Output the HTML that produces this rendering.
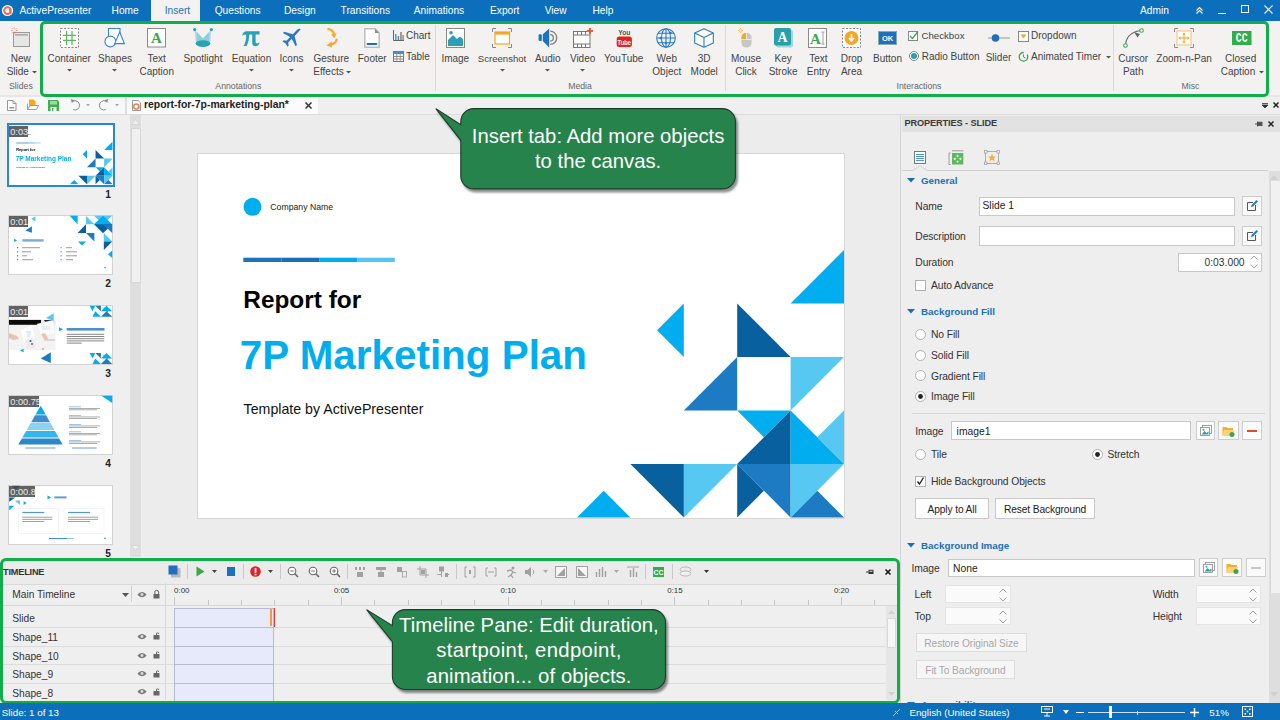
<!DOCTYPE html><html><head><meta charset="utf-8"><style>
html,body{margin:0;padding:0;}
body{width:1280px;height:720px;position:relative;overflow:hidden;background:#efefef;font-family:"Liberation Sans", sans-serif;}
.t{position:absolute;white-space:nowrap;line-height:20px;}
svg{overflow:visible}
</style></head><body>
<div style="position:absolute;left:0px;top:0px;width:1280px;height:21px;background:#0b6fbc;"></div>
<div style="position:absolute;left:151px;top:0px;width:49px;height:21px;background:#f3f2f1;"></div>
<svg style="position:absolute;left:1px;top:4px;" width="13" height="13" viewBox="0 0 13 13"><circle cx="6.5" cy="6.5" r="5.6" fill="#fff"/><circle cx="6.5" cy="6.6" r="3.4" fill="none" stroke="#ec6a4f" stroke-width="1.9"/><path d="M8.6 5 L9.8 10" stroke="#ec6a4f" stroke-width="1.6"/></svg>
<div class="t" style="left:19.4px;top:1.4000000000000004px;font-size:10.2px;color:#ffffff;font-weight:normal;">ActivePresenter</div>
<div class="t" style="left:111.6px;top:1.4000000000000004px;font-size:10.2px;color:#ffffff;font-weight:normal;">Home</div>
<div class="t" style="left:164.7px;top:1.4000000000000004px;font-size:10.2px;color:#1f6fb8;font-weight:normal;">Insert</div>
<div class="t" style="left:214.7px;top:1.4000000000000004px;font-size:10.2px;color:#ffffff;font-weight:normal;">Questions</div>
<div class="t" style="left:284px;top:1.4000000000000004px;font-size:10.2px;color:#ffffff;font-weight:normal;">Design</div>
<div class="t" style="left:340.6px;top:1.4000000000000004px;font-size:10.2px;color:#ffffff;font-weight:normal;">Transitions</div>
<div class="t" style="left:413.8px;top:1.4000000000000004px;font-size:10.2px;color:#ffffff;font-weight:normal;">Animations</div>
<div class="t" style="left:490px;top:1.4000000000000004px;font-size:10.2px;color:#ffffff;font-weight:normal;">Export</div>
<div class="t" style="left:544.7px;top:1.4000000000000004px;font-size:10.2px;color:#ffffff;font-weight:normal;">View</div>
<div class="t" style="left:592.5px;top:1.4000000000000004px;font-size:10.2px;color:#ffffff;font-weight:normal;">Help</div>
<div class="t" style="left:1140px;top:1.1999999999999993px;font-size:10.2px;color:#fff;font-weight:normal;">Admin</div>
<svg style="position:absolute;left:1194px;top:5px;" width="11" height="11" viewBox="0 0 11 11"><path d="M2.5 5.5 L5.5 2.5 L8.5 5.5 M2.5 8.5 L5.5 5.5 L8.5 8.5" stroke="#fff" stroke-width="1.1" fill="none"/></svg>
<div style="position:absolute;left:1218px;top:13px;width:8px;height:1px;background:#fff;"></div>
<div style="position:absolute;left:1241px;top:5px;width:8px;height:8px;border:1px solid #fff;box-sizing:border-box;"></div>
<svg style="position:absolute;left:1264px;top:5px;" width="9" height="9" viewBox="0 0 9 9"><path d="M0.5 0.5 L8.5 8.5 M8.5 0.5 L0.5 8.5" stroke="#fff" stroke-width="1.1"/></svg>
<div style="position:absolute;left:0px;top:21px;width:1280px;height:74px;background:#f3f2f1;"></div>
<div style="position:absolute;left:0px;top:95px;width:1280px;height:2px;background:#e6e6e6;"></div>
<div style="position:absolute;left:40px;top:21px;width:1228.5px;height:75.5px;border:3px solid #10ad4b;border-radius:5px;box-sizing:border-box;"></div>
<div style="position:absolute;left:435px;top:25px;width:1px;height:66px;background:#dadada;"></div>
<div style="position:absolute;left:725px;top:25px;width:1px;height:66px;background:#dadada;"></div>
<div style="position:absolute;left:1113px;top:25px;width:1px;height:66px;background:#dadada;"></div>
<svg style="position:absolute;left:11px;top:27px;" width="20" height="21" viewBox="0 0 20 21"><rect x="2.5" y="5.5" width="16" height="14" fill="#e6e6e6" stroke="#999" stroke-width="1"/><rect x="4" y="7" width="13" height="1.6" fill="#aaa"/><g stroke="#f07050" stroke-width="0.7"><path d="M3.2 0.3 V1.8 M3.2 5.2 V6.7 M0 3.5 H1.5 M4.9 3.5 H6.4 M1 1.3 L2 2.3 M4.4 4.7 L5.4 5.7 M5.4 1.3 L4.4 2.3 M2 4.7 L1 5.7"/></g></svg>
<div class="t" style="left:-179.2px;width:400px;text-align:center;top:48.6px;font-size:10px;color:#444;font-weight:normal;">New</div>
<div class="t" style="left:-182.2px;width:400px;text-align:center;top:61.8px;font-size:10px;color:#444;font-weight:normal;">Slide</div>
<svg style="position:absolute;left:31.5px;top:70.9px;" width="5" height="3" viewBox="0 0 5 3"><path d="M0 0 L5 0 L2.5 2.6 Z" fill="#555"/></svg>
<div class="t" style="left:-179.1px;width:400px;text-align:center;top:75.6px;font-size:8.7px;color:#666;font-weight:normal;">Slides</div>
<svg style="position:absolute;left:60px;top:28px;" width="19" height="20" viewBox="0 0 19 20"><rect x="0.5" y="0.5" width="18" height="19" fill="#fff" stroke="#888" stroke-dasharray="2 1.5"/><g stroke="#5cb85c" stroke-width="1.3"><path d="M6.6 3 V17 M12 3 V17 M3 7.3 H16 M3 12.4 H16"/></g></svg>
<div class="t" style="left:-130.8px;width:400px;text-align:center;top:48.6px;font-size:10px;color:#444;font-weight:normal;">Container</div>
<svg style="position:absolute;left:66.9px;top:69.2px;" width="5" height="3" viewBox="0 0 5 3"><path d="M0 0 L5 0 L2.5 2.6 Z" fill="#555"/></svg>
<svg style="position:absolute;left:104px;top:28px;" width="21" height="20" viewBox="0 0 21 20"><rect x="4.5" y="0.5" width="11.5" height="11" fill="#fff" stroke="#3a86d0" stroke-width="1.1"/><circle cx="6.3" cy="13.5" r="5.4" fill="#fff" stroke="#3a86d0" stroke-width="1.1"/><path d="M15.7 4 L10.7 15.6 L20.4 15.6 Z" fill="#fff" stroke="#3a86d0" stroke-width="1.1"/></svg>
<div class="t" style="left:-85px;width:400px;text-align:center;top:48.6px;font-size:10px;color:#444;font-weight:normal;">Shapes</div>
<svg style="position:absolute;left:112.2px;top:69.2px;" width="5" height="3" viewBox="0 0 5 3"><path d="M0 0 L5 0 L2.5 2.6 Z" fill="#555"/></svg>
<svg style="position:absolute;left:147px;top:28px;" width="19" height="19.5" viewBox="0 0 19 19.5"><rect x="0.5" y="0.5" width="18" height="18.5" fill="#fff" stroke="#8a8a8a" stroke-width="1"/><text x="9.5" y="15.2" font-family="Liberation Serif" font-weight="bold" font-size="15" fill="#3aa84a" text-anchor="middle">A</text></svg>
<div class="t" style="left:-43.30000000000001px;width:400px;text-align:center;top:48.6px;font-size:10px;color:#444;font-weight:normal;">Text</div>
<div class="t" style="left:-43.30000000000001px;width:400px;text-align:center;top:61.8px;font-size:10px;color:#444;font-weight:normal;">Caption</div>
<svg style="position:absolute;left:193px;top:28px;" width="20" height="20" viewBox="0 0 20 20"><path d="M1.7 1.6 L10 10.5 L18.3 1.6 L17.2 15.2 H2.8 Z" fill="#a9dbe3"/><path d="M4 4.2 L10 10.5 L16 4.2 L16.3 14 H3.7 Z" fill="#8fcfda"/><ellipse cx="10" cy="15.6" rx="7.3" ry="3.4" fill="#2aa0b3"/><circle cx="1.7" cy="1.6" r="1.6" fill="#2aa0b3"/><circle cx="18.3" cy="1.6" r="1.6" fill="#2aa0b3"/></svg>
<div class="t" style="left:3px;width:400px;text-align:center;top:48.6px;font-size:10px;color:#444;font-weight:normal;">Spotlight</div>
<svg style="position:absolute;left:242px;top:30px;" width="18" height="17" viewBox="0 0 18 17"><path d="M0.3 5.2 C0.8 2.8 2.2 1.2 4.8 1.2 H17.6 V4.6 H13.6 V11.6 C13.6 13 14.3 13.5 15.2 13.5 C15.9 13.5 16.5 13.1 16.9 12.4 L17.6 12.8 C16.9 15 15.6 16.2 13.6 16.2 C11.3 16.2 10.2 14.8 10.2 12.4 V4.6 H7.2 C7 9 6.4 13 4.6 16 H1.6 C3.6 12.6 4.3 8.8 4.3 4.6 C2.6 4.6 1.6 5 1 5.6 Z" fill="#2aa0b3"/></svg>
<div class="t" style="left:51.5px;width:400px;text-align:center;top:48.6px;font-size:10px;color:#444;font-weight:normal;">Equation</div>
<svg style="position:absolute;left:249.0px;top:69.2px;" width="5" height="3" viewBox="0 0 5 3"><path d="M0 0 L5 0 L2.5 2.6 Z" fill="#555"/></svg>
<svg style="position:absolute;left:282px;top:28px;" width="20" height="20" viewBox="0 0 20 20"><path transform="translate(-0.8,0.2) scale(1.06,1.1)" d="M19 1 C17.5 0 15.8 0.6 14.6 1.8 L11 5.4 L2.8 3.2 L1.6 4.4 L8.4 8 L5 11.4 L2.2 11 L1.2 12 L4.2 13.8 L6 16.8 L7 15.8 L6.6 13 L10 9.6 L13.6 16.4 L14.8 15.2 L12.6 7 L16.2 3.4 C17.4 2.2 18 0.5 19 1 Z" fill="#2878c8"/></svg>
<div class="t" style="left:91.5px;width:400px;text-align:center;top:48.6px;font-size:10px;color:#444;font-weight:normal;">Icons</div>
<svg style="position:absolute;left:289.0px;top:69.2px;" width="5" height="3" viewBox="0 0 5 3"><path d="M0 0 L5 0 L2.5 2.6 Z" fill="#555"/></svg>
<svg style="position:absolute;left:326px;top:28px;" width="12" height="20" viewBox="0 0 12 20"><path d="M1.5 0.8 C5 1.2 7.6 3 8.2 6.8" stroke="#f7a832" stroke-width="2.3" fill="none"/><path d="M5.2 6.2 L10.6 5.6 L8.3 10.6 Z" fill="#f7a832"/><path d="M10.8 10.8 C10.6 14 8.4 15.8 5 16.6" stroke="#f7a832" stroke-width="2.3" fill="none"/><path d="M5.8 13.2 L0.5 17.6 L6 19.6 Z" fill="#f7a832"/></svg>
<div class="t" style="left:131.3px;width:400px;text-align:center;top:48.6px;font-size:10px;color:#444;font-weight:normal;">Gesture</div>
<div class="t" style="left:128.5px;width:400px;text-align:center;top:61.8px;font-size:10px;color:#444;font-weight:normal;">Effects</div>
<svg style="position:absolute;left:345.5px;top:70.7px;" width="5" height="3" viewBox="0 0 5 3"><path d="M0 0 L5 0 L2.5 2.6 Z" fill="#555"/></svg>
<svg style="position:absolute;left:364px;top:28px;" width="16" height="20" viewBox="0 0 16 20"><path d="M0.8 0.8 H11 L15.2 5 V19.2 H0.8 Z" fill="#fff" stroke="#bdbdbd" stroke-width="1.5" stroke-linejoin="round"/><path d="M11 0.8 L15.2 5 H11 Z" fill="#8a8a8a"/><rect x="2.6" y="15" width="10.8" height="1.9" rx="0.9" fill="#1a6fc0"/></svg>
<div class="t" style="left:172.2px;width:400px;text-align:center;top:48.6px;font-size:10px;color:#444;font-weight:normal;">Footer</div>
<svg style="position:absolute;left:393px;top:30px;" width="11" height="11" viewBox="0 0 11 11"><path d="M0.5 0 V10.5 H11" stroke="#666" fill="none"/><rect x="2" y="4" width="1.6" height="6" fill="#4aa3df"/><rect x="4.6" y="6" width="1.6" height="4" fill="#888"/><rect x="7.2" y="2" width="1.6" height="8" fill="#888"/><rect x="9.4" y="5" width="1.4" height="5" fill="#888"/></svg>
<div class="t" style="left:406px;top:26.200000000000003px;font-size:10px;color:#444;font-weight:normal;">Chart</div>
<svg style="position:absolute;left:393px;top:50.5px;" width="11" height="11" viewBox="0 0 11 11"><rect x="0.5" y="0.5" width="10" height="10" fill="#fff" stroke="#777"/><rect x="0.5" y="0.5" width="10" height="2.5" fill="#4a90d0"/><path d="M0.5 5.5 H10.5 M0.5 8 H10.5 M3.8 3 V10.5 M7.2 3 V10.5" stroke="#777" stroke-width="0.8"/></svg>
<div class="t" style="left:406px;top:46.5px;font-size:10px;color:#444;font-weight:normal;">Table</div>
<div class="t" style="left:38.30000000000001px;width:400px;text-align:center;top:75.6px;font-size:8.7px;color:#666;font-weight:normal;">Annotations</div>
<svg style="position:absolute;left:446px;top:28px;" width="19" height="20" viewBox="0 0 19 20"><rect x="0.5" y="0.5" width="18" height="19" fill="#fff" stroke="#888"/><path d="M2 18 L2 12 L7 7 L11 11 L14 8.5 L17 11 V18 Z" fill="#2aa0b3"/><circle cx="5" cy="4.8" r="1.8" fill="#2aa0b3"/></svg>
<div class="t" style="left:255.3px;width:400px;text-align:center;top:48.6px;font-size:10px;color:#444;font-weight:normal;">Image</div>
<svg style="position:absolute;left:492px;top:28px;" width="20" height="20" viewBox="0 0 20 20"><g stroke="#888" fill="none" stroke-width="1"><path d="M0.5 4 V0.5 H4 M16 0.5 H19.5 V4 M19.5 16 V19.5 H16 M4 19.5 H0.5 V16"/></g><rect x="3" y="4" width="14.5" height="12" fill="#fff" stroke="#f5a623" stroke-width="1.2"/><rect x="3" y="4" width="14.5" height="2.6" fill="#f5a623"/></svg>
<div class="t" style="left:302px;width:400px;text-align:center;top:48.6px;font-size:9.6px;color:#444;font-weight:normal;">Screenshot</div>
<svg style="position:absolute;left:499.5px;top:69.2px;" width="5" height="3" viewBox="0 0 5 3"><path d="M0 0 L5 0 L2.5 2.6 Z" fill="#555"/></svg>
<svg style="position:absolute;left:538px;top:28px;" width="20" height="20" viewBox="0 0 20 20"><rect x="0.6" y="6.3" width="3.2" height="6.8" rx="1" fill="#1a73c0"/><path d="M4.8 6.3 L11.2 0.6 V19.4 L4.8 13.1 Z" fill="#1a73c0"/><path d="M12.2 6.6 A3.2 3.2 0 0 1 12.2 13" stroke="#808080" stroke-width="1.3" fill="none"/><path d="M12.2 3.2 A6.6 6.6 0 0 1 12.2 16.4" stroke="#808080" stroke-width="1.3" fill="none"/></svg>
<div class="t" style="left:347.79999999999995px;width:400px;text-align:center;top:48.6px;font-size:10px;color:#444;font-weight:normal;">Audio</div>
<svg style="position:absolute;left:545.3px;top:69.2px;" width="5" height="3" viewBox="0 0 5 3"><path d="M0 0 L5 0 L2.5 2.6 Z" fill="#555"/></svg>
<svg style="position:absolute;left:573px;top:28px;" width="20" height="20" viewBox="0 0 20 20"><rect x="0.5" y="3.5" width="16.5" height="16" fill="#fff" stroke="#777"/><path d="M0.5 7 H17 M0.5 16 H17 M4.5 3.5 V7 M8.5 3.5 V7 M12.5 3.5 V7 M4.5 16 V19.5 M8.5 16 V19.5 M12.5 16 V19.5" stroke="#777"/><path d="M17 0 V6 M14 3 H20" stroke="#f05a28" stroke-width="2"/></svg>
<div class="t" style="left:382.6px;width:400px;text-align:center;top:48.6px;font-size:10px;color:#444;font-weight:normal;">Video</div>
<svg style="position:absolute;left:580.0px;top:69.2px;" width="5" height="3" viewBox="0 0 5 3"><path d="M0 0 L5 0 L2.5 2.6 Z" fill="#555"/></svg>
<svg style="position:absolute;left:616px;top:28px;" width="17" height="20" viewBox="0 0 17 20"><text x="8.3" y="7.4" font-family="Liberation Sans" font-weight="bold" font-size="8" fill="#555" text-anchor="middle" transform="translate(8.3 0) scale(0.85 1) translate(-8.3 0)">You</text><rect x="0.7" y="8.4" width="15.2" height="10.6" rx="2.5" fill="#e62117"/><text x="8.3" y="16.6" font-family="Liberation Sans" font-weight="bold" font-size="7.5" fill="#fff" text-anchor="middle" transform="translate(8.3 0) scale(0.78 1) translate(-8.3 0)">Tube</text></svg>
<div class="t" style="left:423.70000000000005px;width:400px;text-align:center;top:48.6px;font-size:10px;color:#444;font-weight:normal;">YouTube</div>
<svg style="position:absolute;left:656px;top:28px;" width="20" height="20" viewBox="0 0 20 20"><g stroke="#2a7ac8" stroke-width="1.1" fill="none"><circle cx="10" cy="10" r="9.3"/><ellipse cx="10" cy="10" rx="4.5" ry="9.3"/><path d="M10 0.7 V19.3 M0.7 10 H19.3 M2 5.2 H18 M2 14.8 H18"/></g><circle cx="4.5" cy="10" r="1.2" fill="#2a7ac8"/><circle cx="14.5" cy="5" r="1.2" fill="#2a7ac8"/><circle cx="10" cy="15" r="1.2" fill="#2a7ac8"/></svg>
<div class="t" style="left:466.79999999999995px;width:400px;text-align:center;top:48.6px;font-size:10px;color:#444;font-weight:normal;">Web</div>
<div class="t" style="left:466.79999999999995px;width:400px;text-align:center;top:61.8px;font-size:10px;color:#444;font-weight:normal;">Object</div>
<svg style="position:absolute;left:694px;top:28px;" width="20" height="20" viewBox="0 0 20 20"><g stroke="#2a7ac8" stroke-width="1.1" fill="#fff" stroke-linejoin="round"><path d="M10 0.7 L19.3 5 L19.3 15 L10 19.3 L0.7 15 L0.7 5 Z"/><path d="M0.7 5 L10 9.5 L19.3 5 M10 9.5 V19.3" fill="none"/></g></svg>
<div class="t" style="left:504.20000000000005px;width:400px;text-align:center;top:48.6px;font-size:10px;color:#444;font-weight:normal;">3D</div>
<div class="t" style="left:504.20000000000005px;width:400px;text-align:center;top:61.8px;font-size:10px;color:#444;font-weight:normal;">Model</div>
<div class="t" style="left:380px;width:400px;text-align:center;top:75.6px;font-size:8.7px;color:#666;font-weight:normal;">Media</div>
<svg style="position:absolute;left:738px;top:28px;" width="16" height="20" viewBox="0 0 16 20"><path d="M3.5 10 C3.5 6.5 5.5 5 8.5 5 C11.5 5 13.5 6.5 13.5 10 V15 C13.5 18 11.5 19.5 8.5 19.5 C5.5 19.5 3.5 18 3.5 15 Z" fill="#c6c6c6"/><path d="M8.5 5 C5.5 5 3.5 6.5 3.5 10 V11.5 H8.5 Z" fill="#f5a623"/><path d="M8.5 5 V11.5 M3.5 11.5 H13.5" stroke="#f3f2f1" stroke-width="0.8"/><g stroke="#f5a623" stroke-width="0.7"><path d="M2.5 0 V1.5 M2.5 3.5 V5 M0 2.5 H1.5 M3.5 2.5 H5 M0.8 0.8 L1.6 1.6 M3.4 3.4 L4.2 4.2 M4.2 0.8 L3.4 1.6 M1.6 3.4 L0.8 4.2"/></g></svg>
<div class="t" style="left:546px;width:400px;text-align:center;top:48.6px;font-size:10px;color:#444;font-weight:normal;">Mouse</div>
<div class="t" style="left:546px;width:400px;text-align:center;top:61.8px;font-size:10px;color:#444;font-weight:normal;">Click</div>
<svg style="position:absolute;left:774px;top:28px;" width="19" height="20" viewBox="0 0 19 20"><rect x="2" y="2" width="17" height="17.5" rx="2" fill="#9fd8dc"/><rect x="0" y="0" width="17" height="17.5" rx="2" fill="#2a9fa8"/><text x="8.5" y="14" font-family="Liberation Serif" font-weight="bold" font-size="14" fill="#fff" text-anchor="middle">A</text></svg>
<div class="t" style="left:583.1px;width:400px;text-align:center;top:48.6px;font-size:10px;color:#444;font-weight:normal;">Key</div>
<div class="t" style="left:583.1px;width:400px;text-align:center;top:61.8px;font-size:10px;color:#444;font-weight:normal;">Stroke</div>
<svg style="position:absolute;left:808px;top:28px;" width="19" height="20" viewBox="0 0 19 20"><rect x="0.5" y="0.5" width="18" height="19" fill="#fff" stroke="#8a8a8a"/><text x="7.5" y="15.5" font-family="Liberation Serif" font-weight="bold" font-size="15" fill="#3aa84a" text-anchor="middle">A</text><path d="M13.5 4 H16.5 M15 4 V16 M13.5 16 H16.5" stroke="#888" stroke-width="0.8"/></svg>
<div class="t" style="left:618.4px;width:400px;text-align:center;top:48.6px;font-size:10px;color:#444;font-weight:normal;">Text</div>
<div class="t" style="left:618.4px;width:400px;text-align:center;top:61.8px;font-size:10px;color:#444;font-weight:normal;">Entry</div>
<svg style="position:absolute;left:842px;top:28px;" width="19" height="20" viewBox="0 0 19 20"><rect x="0.5" y="0.5" width="18" height="19" fill="#fff" stroke="#888" stroke-dasharray="2 1.5"/><circle cx="9.5" cy="10" r="7" fill="#f5a623"/><path d="M9.5 6 V12 M7 10 L9.5 13 L12 10" stroke="#fff" stroke-width="1.7" fill="none"/></svg>
<div class="t" style="left:651.5px;width:400px;text-align:center;top:48.6px;font-size:10px;color:#444;font-weight:normal;">Drop</div>
<div class="t" style="left:651.5px;width:400px;text-align:center;top:61.8px;font-size:10px;color:#444;font-weight:normal;">Area</div>
<svg style="position:absolute;left:878px;top:31px;" width="19" height="14" viewBox="0 0 19 14"><rect x="0.5" y="0.5" width="18" height="13" fill="#1e6fc0" stroke="#8aa"/><text x="9.5" y="10.3" font-family="Liberation Sans" font-weight="bold" font-size="7.5" fill="#fff" text-anchor="middle">OK</text></svg>
<div class="t" style="left:687.5px;width:400px;text-align:center;top:48.6px;font-size:10px;color:#444;font-weight:normal;">Button</div>
<svg style="position:absolute;left:908px;top:31px;" width="11" height="10" viewBox="0 0 11 10"><rect x="0.5" y="0.5" width="9" height="9" fill="#fff" stroke="#888"/><path d="M2 5 L4.5 7.5 L10 0.5" stroke="#3aa84a" stroke-width="1.3" fill="none"/></svg>
<div class="t" style="left:921.4px;top:26.299999999999997px;font-size:9.7px;color:#444;font-weight:normal;">Checkbox</div>
<svg style="position:absolute;left:909px;top:51px;" width="10" height="10" viewBox="0 0 10 10"><circle cx="5" cy="5" r="4.5" fill="#fff" stroke="#888"/><circle cx="5" cy="5" r="3" fill="#2aa0b3"/></svg>
<div class="t" style="left:921.7px;top:46.8px;font-size:10px;color:#444;font-weight:normal;">Radio Button</div>
<svg style="position:absolute;left:988px;top:34px;" width="22" height="8" viewBox="0 0 22 8"><path d="M0 4 H22" stroke="#999" stroke-width="1"/><circle cx="7.5" cy="4" r="3.8" fill="#1e6fc0"/></svg>
<div class="t" style="left:798.5px;width:400px;text-align:center;top:47.5px;font-size:10px;color:#444;font-weight:normal;">Slider</div>
<svg style="position:absolute;left:1018px;top:30.5px;" width="11" height="11" viewBox="0 0 11 11"><rect x="0.5" y="0.5" width="10" height="10" fill="#fff" stroke="#888"/><path d="M2.5 3.5 L8.5 3.5 L5.5 7.5 Z" fill="#f5a623"/></svg>
<div class="t" style="left:1031px;top:26.299999999999997px;font-size:10px;color:#444;font-weight:normal;">Dropdown</div>
<svg style="position:absolute;left:1018px;top:51px;" width="11" height="11" viewBox="0 0 11 11"><circle cx="5.5" cy="5.8" r="4.3" fill="none" stroke="#3aa84a" stroke-width="1.3" stroke-dasharray="20 4"/><path d="M5.5 3.5 V6 L7.5 7" stroke="#3aa84a" stroke-width="1" fill="none"/></svg>
<div class="t" style="left:1031px;top:47.0px;font-size:10px;color:#444;font-weight:normal;">Animated Timer</div>
<svg style="position:absolute;left:1105.5px;top:55.7px;" width="5" height="3" viewBox="0 0 5 3"><path d="M0 0 L5 0 L2.5 2.6 Z" fill="#555"/></svg>
<div class="t" style="left:719px;width:400px;text-align:center;top:75.6px;font-size:8.7px;color:#666;font-weight:normal;">Interactions</div>
<svg style="position:absolute;left:1123px;top:28px;" width="21" height="20" viewBox="0 0 21 20"><path d="M2.5 17.5 C3 10 7 4 17.5 2.5" stroke="#666" stroke-width="1.1" fill="none"/><circle cx="2.5" cy="17.5" r="1.8" fill="#fff" stroke="#3aa84a" stroke-width="1.1"/><circle cx="18.5" cy="2.5" r="1.8" fill="#fff" stroke="#3aa84a" stroke-width="1.1"/><path d="M11 4 L17 6 L14.5 9.5 Z" fill="#666"/></svg>
<div class="t" style="left:933.2px;width:400px;text-align:center;top:48.6px;font-size:10px;color:#444;font-weight:normal;">Cursor</div>
<div class="t" style="left:933.2px;width:400px;text-align:center;top:61.8px;font-size:10px;color:#444;font-weight:normal;">Path</div>
<svg style="position:absolute;left:1174px;top:28px;" width="20" height="20" viewBox="0 0 20 20"><g stroke="#888" fill="none"><path d="M0.5 4 V0.5 H4 M16 0.5 H19.5 V4 M19.5 16 V19.5 H16 M4 19.5 H0.5 V16"/></g><rect x="3" y="3" width="14" height="14" fill="#fff" stroke="#f7b04a" stroke-width="0.8"/><path d="M10 5 V15 M5 10 H15" stroke="#f5a623" stroke-width="1.1"/><path d="M10 4.5 L8.3 6.5 H11.7 Z M10 15.5 L8.3 13.5 H11.7 Z M4.5 10 L6.5 8.3 V11.7 Z M15.5 10 L13.5 8.3 V11.7 Z" fill="#f5a623"/></svg>
<div class="t" style="left:984.0999999999999px;width:400px;text-align:center;top:48.6px;font-size:10px;color:#444;font-weight:normal;">Zoom-n-Pan</div>
<svg style="position:absolute;left:1232px;top:31px;" width="19.5" height="14" viewBox="0 0 19.5 14"><rect x="0" y="0" width="19.5" height="14" fill="#2fae49"/><text x="9.7" y="11.3" font-family="Liberation Mono" font-weight="bold" font-size="12" fill="#fff" text-anchor="middle" transform="translate(9.7 0) scale(0.82 1) translate(-9.7 0)">CC</text></svg>
<div class="t" style="left:1040.7px;width:400px;text-align:center;top:48.6px;font-size:10px;color:#444;font-weight:normal;">Closed</div>
<div class="t" style="left:1038px;width:400px;text-align:center;top:61.8px;font-size:10px;color:#444;font-weight:normal;">Caption</div>
<svg style="position:absolute;left:1258.5px;top:70.9px;" width="5" height="3" viewBox="0 0 5 3"><path d="M0 0 L5 0 L2.5 2.6 Z" fill="#555"/></svg>
<div class="t" style="left:990.5px;width:400px;text-align:center;top:75.6px;font-size:8.7px;color:#666;font-weight:normal;">Misc</div>
<div style="position:absolute;left:0px;top:97px;width:1280px;height:18px;background:#efefef;"></div>
<div style="position:absolute;left:0px;top:97px;width:125px;height:17px;background:#f8f8f8;"></div>
<div style="position:absolute;left:0px;top:114px;width:1280px;height:1px;background:#dcdcdc;"></div>
<svg style="position:absolute;left:7px;top:99.5px;" width="10" height="11" viewBox="0 0 10 11"><path d="M0.5 0.5 H6 L9 3.5 V10.5 H0.5 Z" fill="#fff" stroke="#8a8a8a" stroke-width="0.9"/><path d="M6 0.5 V3.5 H9" fill="none" stroke="#8a8a8a" stroke-width="0.8"/><rect x="2.3" y="7" width="5" height="1.5" fill="#999"/></svg>
<svg style="position:absolute;left:27px;top:99px;" width="12" height="12" viewBox="0 0 12 12"><path d="M2 0.5 H6.5 L8.5 2.5 V7.5 H2 Z" fill="#f5a623"/><path d="M0.5 4.5 V10.5 H9.5 L11.5 6.5 H3 L0.5 10.5" fill="#fafafa" stroke="#8a8a8a" stroke-width="0.8"/></svg>
<svg style="position:absolute;left:48px;top:99.5px;" width="11" height="11" viewBox="0 0 11 11"><path d="M0 0 H9.5 L11 1.5 V11 H0 Z" fill="#3fae4c"/><rect x="2" y="1" width="7" height="3.5" fill="#9fd8a8"/><rect x="2.5" y="7" width="6" height="4" fill="#fafafa"/><rect x="4" y="8" width="1.3" height="3" fill="#3fae4c"/></svg>
<svg style="position:absolute;left:70px;top:99px;" width="10" height="12" viewBox="0 0 10 12"><path d="M3 2.2 A4.6 4.6 0 1 1 3.2 10.6" stroke="#8a8a8a" stroke-width="1" fill="none"/><path d="M0.8 0 L4.6 1.2 L1.8 4 Z" fill="#8a8a8a"/></svg>
<svg style="position:absolute;left:85.5px;top:104px;" width="4" height="3" viewBox="0 0 4 3"><path d="M0 0 H4 L2 2.5 Z" fill="#aaa"/></svg>
<svg style="position:absolute;left:99px;top:99px;" width="10" height="12" viewBox="0 0 10 12"><path d="M7 2.2 A4.6 4.6 0 1 0 6.8 10.6" stroke="#8a8a8a" stroke-width="1" fill="none"/><path d="M9.2 0 L5.4 1.2 L8.2 4 Z" fill="#8a8a8a"/></svg>
<svg style="position:absolute;left:114.5px;top:104px;" width="4" height="3" viewBox="0 0 4 3"><path d="M0 0 H4 L2 2.5 Z" fill="#aaa"/></svg>
<div style="position:absolute;left:124.5px;top:97px;width:2px;height:17px;background:#dedede;"></div>
<div style="position:absolute;left:126.8px;top:97px;width:191px;height:17px;background:#fbfbfb;"></div>
<svg style="position:absolute;left:132px;top:100px;" width="9" height="11" viewBox="0 0 9 11"><path d="M0.5 0.5 H6.2 L8.5 2.8 V10.5 H0.5 Z" fill="#fff" stroke="#8c8c8c" stroke-width="0.9"/><circle cx="4.3" cy="6.6" r="2.6" fill="none" stroke="#f07a50" stroke-width="1.4"/><path d="M6.2 5.6 L6.8 9" stroke="#f07a50" stroke-width="1.2"/></svg>
<div class="t" style="left:144px;top:94.7px;font-size:10.4px;color:#222;font-weight:bold;">report-for-7p-marketing-plan*</div>
<svg style="position:absolute;left:305px;top:102px;" width="7" height="7" viewBox="0 0 7 7"><path d="M0.5 0.5 L6.5 6.5 M6.5 0.5 L0.5 6.5" stroke="#333" stroke-width="1.5"/></svg>
<svg style="position:absolute;left:1261.5px;top:102.5px;" width="6" height="5" viewBox="0 0 6 5"><path d="M0 0.5 H6 M0 2 H6 L3 5 Z" stroke="#333" fill="#333" stroke-width="0.8"/></svg>
<svg style="position:absolute;left:1272.5px;top:102.3px;" width="6" height="6" viewBox="0 0 6 6"><path d="M0.5 0.5 L5.5 5.5 M5.5 0.5 L0.5 5.5" stroke="#222" stroke-width="1.5"/></svg>
<div style="position:absolute;left:0px;top:115px;width:130px;height:443px;background:#efefef;"></div>
<div style="position:absolute;left:129.5px;top:115px;width:11.5px;height:443px;background:#dedede;"></div>
<div style="position:absolute;left:142px;top:115px;width:1.2px;height:443px;background:#dedede;"></div>
<div style="position:absolute;left:130.5px;top:127.5px;width:10px;height:155px;background:#f0f0f0;border:1px solid #d6d6d6;box-sizing:border-box;"></div>
<svg style="position:absolute;left:130px;top:117px;" width="11" height="9" viewBox="0 0 11 9"><path d="M1.5 7.5 L5.5 2.5 L9.5 7.5 Z" fill="#f0f0f0" stroke="#d0d0d0" stroke-width="0.8"/></svg>
<svg style="position:absolute;left:130px;top:544px;" width="11" height="9" viewBox="0 0 11 9"><path d="M1.5 1.5 L5.5 6.5 L9.5 1.5 Z" fill="#f0f0f0" stroke="#d0d0d0" stroke-width="0.8"/></svg>
<div style="position:absolute;left:115px;top:115px;width:0px;height:0px;"></div>
<div style="position:absolute;left:142px;top:115px;width:758px;height:443px;background:#ececec;"></div>
<div style="position:absolute;left:142px;top:114px;width:758px;height:1px;background:#dcdcdc;"></div>
<div style="position:absolute;left:197px;top:153px;width:648px;height:365.5px;background:#fff;border:1px solid #d6d6d6;box-sizing:border-box;"></div>
<div style="position:absolute;left:198px;top:154px;width:646px;height:364px;overflow:hidden;"><div class="t" style="left:0;top:0;width:646px;height:364px;background:#fff;"></div><svg style="position:absolute;left:0;top:0" width="646" height="364" viewBox="0 0 646 364"><circle cx="54.5" cy="52.8" r="9" fill="#00aeef"/><rect x="45.3" y="103.7" width="38" height="4.3" fill="#1c75bc"/><rect x="83.3" y="103.7" width="37.8" height="4.3" fill="#1b6fb6"/><rect x="121.1" y="103.7" width="38" height="4.3" fill="#00aeef"/><rect x="159.1" y="103.7" width="37.7" height="4.3" fill="#56c6f1"/><path d="M592.6 149.5 L646.0 96.0 L646.0 149.5 Z" fill="#00aeef"/><path d="M459.1 176.2 L485.8 149.5 L485.8 203.0 Z" fill="#00aeef"/><path d="M539.2 149.5 L539.2 203.0 L592.6 203.0 Z" fill="#08609e"/><path d="M485.8 256.5 L539.2 203.0 L539.2 256.5 Z" fill="#1c7bc2"/><path d="M592.6 203.0 L646.0 203.0 L592.6 256.5 Z" fill="#56c8f2"/><path d="M539.2 256.5 L592.6 256.5 L565.9 283.2 Z" fill="#00aeef"/><path d="M539.2 310.0 L592.6 256.5 L592.6 310.0 Z" fill="#08609e"/><path d="M646.0 256.5 L619.3 283.2 L646.0 310.0 Z" fill="#56c8f2"/><path d="M592.6 256.5 L592.6 310.0 L646.0 310.0 Z" fill="#00aeef"/><path d="M539.2 310.0 L592.6 310.0 L592.6 363.5 Z" fill="#1c7bc2"/><path d="M539.2 310.0 L565.9 336.8 L539.2 363.5 Z" fill="#08609e"/><path d="M592.6 310.0 L646.0 310.0 L592.6 363.5 Z" fill="#56c8f2"/><path d="M592.6 363.5 L619.3 336.8 L646.0 363.5 Z" fill="#1c7bc2"/><path d="M485.8 310.0 L539.2 310.0 L485.8 363.5 Z" fill="#56c8f2"/><path d="M432.4 310.0 L485.8 310.0 L485.8 363.5 Z" fill="#08609e"/><path d="M379.0 363.5 L405.7 336.8 L432.4 363.5 Z" fill="#00aeef"/></svg><div class="t" style="left:72.3px;top:42.7px;font-size:8.7px;color:#222;font-weight:normal;">Company Name</div><div class="t" style="left:45.3px;top:136.1px;font-size:24.4px;color:#000;font-weight:bold;">Report for</div><div class="t" style="left:41.8px;top:190.9px;font-size:40.4px;color:#00aeef;font-weight:bold;">7P Marketing Plan</div><div class="t" style="left:45.6px;top:245.3px;font-size:14.2px;color:#111;font-weight:normal;">Template by ActivePresenter</div></div>
<div style="position:absolute;left:7px;top:123.1px;width:107.5px;height:63.5px;border:2.3px solid #2a86db;box-sizing:border-box;background:#fff;"></div>
<div style="position:absolute;left:9px;top:126px;width:646px;height:364px;transform:scale(0.1605);transform-origin:0 0;overflow:hidden;"><div class="t" style="left:0;top:0;width:646px;height:364px;background:#fff;"></div><svg style="position:absolute;left:0;top:0" width="646" height="364" viewBox="0 0 646 364"><circle cx="54.5" cy="52.8" r="9" fill="#00aeef"/><rect x="45.3" y="103.7" width="38" height="4.3" fill="#1c75bc"/><rect x="83.3" y="103.7" width="37.8" height="4.3" fill="#1b6fb6"/><rect x="121.1" y="103.7" width="38" height="4.3" fill="#00aeef"/><rect x="159.1" y="103.7" width="37.7" height="4.3" fill="#56c6f1"/><path d="M592.6 149.5 L646.0 96.0 L646.0 149.5 Z" fill="#00aeef"/><path d="M459.1 176.2 L485.8 149.5 L485.8 203.0 Z" fill="#00aeef"/><path d="M539.2 149.5 L539.2 203.0 L592.6 203.0 Z" fill="#08609e"/><path d="M485.8 256.5 L539.2 203.0 L539.2 256.5 Z" fill="#1c7bc2"/><path d="M592.6 203.0 L646.0 203.0 L592.6 256.5 Z" fill="#56c8f2"/><path d="M539.2 256.5 L592.6 256.5 L565.9 283.2 Z" fill="#00aeef"/><path d="M539.2 310.0 L592.6 256.5 L592.6 310.0 Z" fill="#08609e"/><path d="M646.0 256.5 L619.3 283.2 L646.0 310.0 Z" fill="#56c8f2"/><path d="M592.6 256.5 L592.6 310.0 L646.0 310.0 Z" fill="#00aeef"/><path d="M539.2 310.0 L592.6 310.0 L592.6 363.5 Z" fill="#1c7bc2"/><path d="M539.2 310.0 L565.9 336.8 L539.2 363.5 Z" fill="#08609e"/><path d="M592.6 310.0 L646.0 310.0 L592.6 363.5 Z" fill="#56c8f2"/><path d="M592.6 363.5 L619.3 336.8 L646.0 363.5 Z" fill="#1c7bc2"/><path d="M485.8 310.0 L539.2 310.0 L485.8 363.5 Z" fill="#56c8f2"/><path d="M432.4 310.0 L485.8 310.0 L485.8 363.5 Z" fill="#08609e"/><path d="M379.0 363.5 L405.7 336.8 L432.4 363.5 Z" fill="#00aeef"/></svg><div class="t" style="left:72.3px;top:42.7px;font-size:8.7px;color:#222;font-weight:normal;">Company Name</div><div class="t" style="left:45.3px;top:136.1px;font-size:24.4px;color:#000;font-weight:bold;">Report for</div><div class="t" style="left:41.8px;top:190.9px;font-size:40.4px;color:#00aeef;font-weight:bold;">7P Marketing Plan</div><div class="t" style="left:45.6px;top:245.3px;font-size:14.2px;color:#111;font-weight:normal;">Template by ActivePresenter</div></div>
<div style="position:absolute;left:8.3px;top:214.7px;width:104.5px;height:60.2px;border:1px solid #d2d2d2;box-sizing:border-box;background:#fff;"></div>
<div style="position:absolute;left:8.3px;top:304.7px;width:104.5px;height:60.2px;border:1px solid #d2d2d2;box-sizing:border-box;background:#fff;"></div>
<div style="position:absolute;left:8.3px;top:394.7px;width:104.5px;height:60.2px;border:1px solid #d2d2d2;box-sizing:border-box;background:#fff;"></div>
<div style="position:absolute;left:8.3px;top:484.7px;width:104.5px;height:60.2px;border:1px solid #d2d2d2;box-sizing:border-box;background:#fff;"></div>
<svg style="position:absolute;left:0px;top:0px;" width="130" height="560" viewBox="0 0 130 560"><path d="M31.3 218.8 L35.4 216.2 L35.4 221.5 Z" fill="#56c8f2"/><path d="M25.4 230.5 L31.9 226.3 L31.9 232.7 Z" fill="#1c7bc2"/><path d="M69.7 215.8 L77.6 215.8 L77.6 224.2 Z" fill="#00aeef"/><path d="M86.0 216.0 L86.0 224.2 L94.4 224.2 Z" fill="#56c8f2"/><path d="M94.0 215.8 L112.2 215.8 L103.0 224.2 Z" fill="#56c8f2"/><path d="M94.0 224.2 L103.0 215.8 L112.2 224.2 L103.0 233.0 Z" fill="#00aeef"/><path d="M94.4 224.2 L112.2 224.2 L103.0 233.0 Z" fill="#08609e"/><path d="M103.0 224.2 L112.2 224.2 L112.2 233.0 Z" fill="#1c7bc2"/><path d="M77.6 233.0 L86.0 224.2 L86.0 233.0 Z" fill="#08609e"/><path d="M86.0 233.0 L94.4 233.0 L94.4 241.5 Z" fill="#1c7bc2"/><path d="M103.8 233.0 L112.2 241.5 L103.8 241.5 Z" fill="#56c8f2"/><path d="M103.8 241.5 L112.2 241.5 L103.8 249.9 Z" fill="#08609e"/><path d="M78.0 241.5 L86.0 241.5 L82.0 245.5 Z" fill="#00aeef"/><path d="M108.0 254.2 L112.2 250.5 L112.2 258.0 Z" fill="#00aeef"/><path d="M14.2 238.5 L17.0 240.4 L14.2 242.3 Z" fill="#00aeef"/><rect x="22.4" y="239.2" width="21.3" height="2.4" fill="#1c75bc" opacity="0.6"/><path d="M17 246.79999999999998 L18.6 247.7 L17 248.6 Z" fill="#1c7bc2"/><rect x="22" y="247.2" width="18" height="1" fill="#999"/><path d="M60.6 246.79999999999998 L62.2 247.7 L60.6 248.6 Z" fill="#00aeef"/><rect x="66" y="247.2" width="6" height="1" fill="#999"/><path d="M17 250.9 L18.6 251.8 L17 252.70000000000002 Z" fill="#1c7bc2"/><rect x="22" y="251.3" width="9" height="1" fill="#999"/><path d="M60.6 250.9 L62.2 251.8 L60.6 252.70000000000002 Z" fill="#00aeef"/><rect x="66" y="251.3" width="11" height="1" fill="#999"/><path d="M17 254.9 L18.6 255.8 L17 256.7 Z" fill="#1c7bc2"/><rect x="22" y="255.3" width="5" height="1" fill="#999"/><path d="M60.6 254.9 L62.2 255.8 L60.6 256.7 Z" fill="#00aeef"/><rect x="66" y="255.3" width="11" height="1" fill="#999"/><path d="M17 258.8 L18.6 259.7 L17 260.59999999999997 Z" fill="#1c7bc2"/><rect x="22" y="259.2" width="11" height="1" fill="#999"/><path d="M60.6 258.8 L62.2 259.7 L60.6 260.59999999999997 Z" fill="#00aeef"/><rect x="66" y="259.2" width="7" height="1" fill="#999"/><circle cx="105" cy="267.6" r="0.8" fill="#00aeef"/><rect x="9" y="319.9" width="46.5" height="30.2" fill="#f3f3f3"/><rect x="9" y="319.9" width="32" height="4.9" fill="#0a0a0a"/><rect x="41" y="319.9" width="14.5" height="4" fill="#e8e8e8"/><path d="M44 320 H53 V324 L47 325 Z" fill="#1a2238"/><path d="M20 330 L32 325 L36 338 L24 344 Z" fill="#fdfdfd" stroke="#e4e4e4" stroke-width="0.3"/><path d="M37 324 L53 320 L55 333 L41 338 Z" fill="#fbfbfb" stroke="#e4e4e4" stroke-width="0.3"/><path d="M25 340 L33 338 L35 348 L27 349 Z" fill="#ececec"/><circle cx="30.5" cy="341" r="1" fill="#2a5aa0"/><circle cx="32" cy="344" r="1.1" fill="#d040b0"/><path d="M26 332 H31 M27 334 H31 M27 336 H30" stroke="#9ab8e0" stroke-width="0.5"/><path d="M41 327 H50 M42 329 H50" stroke="#b8c8e0" stroke-width="0.5"/><circle cx="43" cy="349" r="0.7" fill="#d04050"/><path d="M9 333 L17 336 L19 339 L13 340 L9 338 Z" fill="#e8c4b0"/><path d="M41 334 L45 333 L49 340 L45 341 Z" fill="#e8c4b0"/><rect x="47" y="339" width="8" height="2" fill="#d8d8d8"/><path d="M46.0 318.0 L53.7 313.3 L53.7 321.0 Z" fill="#56c8f2"/><path d="M40.7 358.5 L50.8 352.3 L50.8 362.9 Z" fill="#1c7bc2"/><path d="M20.0 350.5 L23.6 348.7 L23.6 352.3 Z" fill="#00aeef"/><path d="M59.0 327.2 L63.0 329.2 L59.0 331.2 Z" fill="#00aeef"/><rect x="66.7" y="328" width="37.8" height="2.6" fill="#1c75bc" opacity="0.8"/><rect x="66.7" y="333.8" width="37.5" height="1" fill="#888"/><rect x="66.7" y="336" width="37.5" height="1" fill="#888"/><rect x="66.7" y="338.2" width="37.5" height="1" fill="#888"/><rect x="66.7" y="340.4" width="37.5" height="1" fill="#888"/><rect x="66.7" y="342.6" width="15" height="1" fill="#888"/><path d="M89.7 305.7 L95.3 305.7 L92.5 311.2 Z" fill="#00aeef"/><path d="M95.3 305.7 L100.9 305.7 L100.9 311.2 Z" fill="#1c7bc2"/><path d="M100.9 311.2 L106.5 305.7 L112.2 311.2 Z" fill="#00aeef"/><path d="M92.5 316.7 L95.3 311.2 L100.9 316.7 Z" fill="#00aeef"/><path d="M100.9 316.7 L106.5 311.2 L112.2 316.7 Z" fill="#1c7bc2"/><path d="M103.0 307.7 L108.0 307.7 L108.0 312.7 Z" fill="#00aeef"/><path d="M89.7 352.9 L95.3 352.9 L92.5 358.4 Z" fill="#00aeef"/><path d="M95.3 352.9 L100.9 352.9 L100.9 358.4 Z" fill="#1c7bc2"/><path d="M100.9 358.4 L106.5 352.9 L112.2 358.4 Z" fill="#00aeef"/><path d="M92.5 363.9 L95.3 358.4 L100.9 363.9 Z" fill="#00aeef"/><path d="M100.9 363.9 L106.5 358.4 L112.2 363.9 Z" fill="#1c7bc2"/><path d="M103.0 354.9 L108.0 354.9 L108.0 359.9 Z" fill="#00aeef"/><path d="M40.7 405.7 L40.7 405.7 L45.7 414.5 L35.6 414.5 Z" fill="#00aeef"/><path d="M35.2 415.3 L46.1 415.3 L50.0 422.3 L31.1 422.3 Z" fill="#3c8dd0"/><path d="M30.7 423.1 L50.5 423.1 L54.4 430.1 L26.6 430.1 Z" fill="#86d4f2"/><path d="M26.2 430.9 L54.9 430.9 L58.7 437.6 L22.3 437.6 Z" fill="#36b4ec"/><path d="M21.9 438.4 L59.1 438.4 L62.6 444.6 L18.3 444.6 Z" fill="#2b86cc"/><rect x="25.4" y="447.5" width="30" height="1" fill="#1c75bc" opacity="0.7"/><rect x="72" y="447.5" width="24.5" height="1" fill="#1c75bc" opacity="0.7"/><rect x="69" y="406.5" width="12" height="0.7" fill="#1c75bc" opacity="0.6"/><rect x="69" y="408.1" width="31" height="0.7" fill="#8a8a8a"/><rect x="69" y="409.5" width="28" height="0.7" fill="#8a8a8a"/><rect x="69" y="415" width="12" height="0.7" fill="#1c75bc" opacity="0.6"/><rect x="69" y="416.6" width="31" height="0.7" fill="#8a8a8a"/><rect x="69" y="418" width="28" height="0.7" fill="#8a8a8a"/><rect x="69" y="424" width="12" height="0.7" fill="#1c75bc" opacity="0.6"/><rect x="69" y="425.6" width="31" height="0.7" fill="#8a8a8a"/><rect x="69" y="427" width="28" height="0.7" fill="#8a8a8a"/><rect x="69" y="431.5" width="12" height="0.7" fill="#1c75bc" opacity="0.6"/><rect x="69" y="433.1" width="31" height="0.7" fill="#8a8a8a"/><rect x="69" y="434.5" width="28" height="0.7" fill="#8a8a8a"/><rect x="69" y="440" width="12" height="0.7" fill="#1c75bc" opacity="0.6"/><rect x="69" y="441.6" width="31" height="0.7" fill="#8a8a8a"/><rect x="69" y="443" width="28" height="0.7" fill="#8a8a8a"/><path d="M101.5 395.7 L112.2 395.7 L112.2 403.0 Z" fill="#00aeef"/><path d="M9.2 497.4 L15.3 497.4 L9.2 501.8 Z" fill="#08609e"/><path d="M12.0 485.8 L20.0 485.8 L16.0 490.0 Z" fill="#1c7bc2"/><path d="M14.8 500.4 L20.0 500.4 L20.0 505.1 Z" fill="#56c8f2"/><path d="M9.2 505.7 L14.2 505.7 L9.2 510.4 Z" fill="#00aeef"/><path d="M23.6 501.0 L26.6 503.0 L23.6 505.0 Z" fill="#00aeef"/><path d="M47.5 495.5 L51.0 497.4 L47.5 499.3 Z" fill="#00aeef"/><rect x="54.3" y="496.4" width="12.2" height="2" fill="#1c75bc" opacity="0.7"/><rect x="18.3" y="508.4" width="40" height="25" fill="#fff" stroke="#e4e4e4" stroke-width="0.4"/><rect x="22.3" y="511.9" width="22" height="1.2" fill="#1c75bc" opacity="0.75"/><rect x="22.3" y="516.8" width="30" height="0.7" fill="#7a7a7a"/><rect x="22.3" y="518.9" width="30" height="0.7" fill="#7a7a7a"/><rect x="22.3" y="521" width="22" height="0.7" fill="#7a7a7a"/><rect x="64" y="508.4" width="40" height="25" fill="#fff" stroke="#e4e4e4" stroke-width="0.4"/><rect x="68" y="511.9" width="22" height="1.2" fill="#1c75bc" opacity="0.75"/><rect x="68" y="516.8" width="30" height="0.7" fill="#7a7a7a"/><rect x="68" y="518.9" width="30" height="0.7" fill="#7a7a7a"/><rect x="68" y="521" width="22" height="0.7" fill="#7a7a7a"/><rect x="49" y="538" width="18" height="0.9" fill="#2a8ad0"/><rect x="67" y="538" width="6.5" height="0.9" fill="#7cc8f0"/><circle cx="105" cy="538.4" r="0.8" fill="#00aeef"/></svg>
<div style="position:absolute;left:9.3px;top:126px;width:19.2px;height:10.8px;background:rgba(70,70,70,0.85);"></div>
<div class="t" style="left:10.3px;top:121.80000000000001px;font-size:9.2px;color:#ececec;font-weight:normal;">0:03</div>
<div style="position:absolute;left:9.3px;top:216.2px;width:19px;height:10.8px;background:rgba(70,70,70,0.85);"></div>
<div class="t" style="left:10.3px;top:212.0px;font-size:9.2px;color:#ececec;font-weight:normal;">0:01</div>
<div style="position:absolute;left:9.3px;top:306.2px;width:19px;height:10.8px;background:rgba(70,70,70,0.85);"></div>
<div class="t" style="left:10.3px;top:302.0px;font-size:9.2px;color:#ececec;font-weight:normal;">0:01</div>
<div style="position:absolute;left:9.3px;top:396.2px;width:30.1px;height:10.8px;background:rgba(70,70,70,0.85);"></div>
<div class="t" style="left:10.3px;top:392.0px;font-size:9.2px;color:#ececec;font-weight:normal;">0:00.75</div>
<div style="position:absolute;left:9.3px;top:486.2px;width:25.4px;height:10.8px;background:rgba(70,70,70,0.85);"></div>
<div class="t" style="left:10.3px;top:482.0px;font-size:9.2px;color:#ececec;font-weight:normal;">0:00.8</div>
<div class="t" style="left:-289.2px;width:400px;text-align:right;top:184.5px;font-size:10.2px;color:#222;font-weight:bold;">1</div>
<div class="t" style="left:-289.2px;width:400px;text-align:right;top:274.3px;font-size:10.2px;color:#222;font-weight:bold;">2</div>
<div class="t" style="left:-289.2px;width:400px;text-align:right;top:364.3px;font-size:10.2px;color:#222;font-weight:bold;">3</div>
<div class="t" style="left:-289.2px;width:400px;text-align:right;top:454.3px;font-size:10.2px;color:#222;font-weight:bold;">4</div>
<div class="t" style="left:-289.2px;width:400px;text-align:right;top:544.3000000000001px;font-size:10.2px;color:#222;font-weight:bold;">5</div>
<div style="position:absolute;left:900px;top:115px;width:1px;height:588px;background:#d4d4d4;"></div>
<div style="position:absolute;left:901px;top:115px;width:379px;height:588px;background:#eeeeee;"></div>
<div style="position:absolute;left:902px;top:115.5px;width:378px;height:16px;background:#e3e2e2;"></div>
<div class="t" style="left:904.4px;top:112.7px;font-size:9.2px;color:#3a3a3a;font-weight:bold;letter-spacing:-0.1px;">PROPERTIES - SLIDE</div>
<svg style="position:absolute;left:1254.5px;top:120.5px;" width="8" height="6" viewBox="0 0 8 6"><path d="M0 3 H2.5" stroke="#555" stroke-width="1"/><rect x="2.5" y="0.8" width="5" height="4.2" fill="#555"/><path d="M2.5 0.5 V5.5" stroke="#333" stroke-width="0.8"/></svg>
<svg style="position:absolute;left:1268.3px;top:120.8px;" width="6" height="6" viewBox="0 0 6 6"><path d="M0.5 0.5 L5.5 5.5 M5.5 0.5 L0.5 5.5" stroke="#222" stroke-width="1.5"/></svg>
<svg style="position:absolute;left:914px;top:151px;" width="12" height="13" viewBox="0 0 12 13"><rect x="0.5" y="0.5" width="11" height="12" fill="#fff" stroke="#777"/><path d="M2 3.5 H10 M2 5.5 H10 M2 7.5 H10 M2 9.5 H10" stroke="#3a8ad6" stroke-width="0.9"/></svg>
<svg style="position:absolute;left:948px;top:150px;" width="16" height="15" viewBox="0 0 16 15"><path d="M4 0.8 H15.3" stroke="#888" stroke-width="0.8"/><path d="M2.5 3 H1 V14.5 H2.5" stroke="#888" stroke-width="0.8" fill="none"/><rect x="4" y="3" width="11.3" height="11.5" fill="#5cb860"/><path d="M9.6 4.6 L11 6 L9.6 7.4 L8.2 6 Z M9.6 10.2 L11 11.6 L9.6 13 L8.2 11.6 Z M6.8 7.4 L8.2 8.8 L6.8 10.2 L5.4 8.8 Z M12.4 7.4 L13.8 8.8 L12.4 10.2 L11 8.8 Z" fill="#e6f5e6"/></svg>
<svg style="position:absolute;left:984px;top:150px;" width="16" height="15" viewBox="0 0 16 15"><path d="M2.5 1.5 H13.5 M2.5 13.5 H13.5 M1.5 2.5 V12.5 M14.5 2.5 V12.5" stroke="#999" stroke-width="0.8"/><rect x="0.6" y="0.6" width="2.4" height="2.4" fill="#fff" stroke="#999" stroke-width="0.7"/><rect x="13" y="0.6" width="2.4" height="2.4" fill="#fff" stroke="#999" stroke-width="0.7"/><rect x="0.6" y="12" width="2.4" height="2.4" fill="#fff" stroke="#999" stroke-width="0.7"/><rect x="13" y="12" width="2.4" height="2.4" fill="#fff" stroke="#999" stroke-width="0.7"/><path d="M8 3.6 L9.2 6.4 L12.1 6.6 L9.9 8.5 L10.6 11.4 L8 9.8 L5.4 11.4 L6.1 8.5 L3.9 6.6 L6.8 6.4 Z" fill="#f5b041"/></svg>
<svg style="position:absolute;left:902px;top:165px;" width="366" height="7" viewBox="0 0 366 7"><path d="M0 5.5 H11 L18 0.5 L25 5.5 H366" stroke="#cfcfcf" fill="#eeeeee" stroke-width="1"/></svg>
<div style="position:absolute;left:1268.5px;top:171px;width:11.5px;height:532px;background:#dedede;"></div>
<div style="position:absolute;left:1269.5px;top:181px;width:10.5px;height:411.5px;background:#f1f1f1;border-left:1px solid #d8d8d8;box-sizing:border-box;"></div>
<svg style="position:absolute;left:1269px;top:173px;" width="10" height="8" viewBox="0 0 10 8"><path d="M1 7 L5 2 L9 7 Z" fill="#d0d0d0"/></svg>
<svg style="position:absolute;left:1269px;top:691px;" width="10" height="8" viewBox="0 0 10 8"><path d="M1 1 L5 6 L9 1 Z" fill="#d0d0d0"/></svg>
<svg style="position:absolute;left:907px;top:178.10000000000002px;" width="8" height="5" viewBox="0 0 8 5"><path d="M0 0 H8 L4 4.6 Z" fill="#1a6fbb"/></svg>
<div class="t" style="left:921px;top:171.0px;font-size:9.8px;color:#1a6fbb;font-weight:bold;">General</div>
<div class="t" style="left:915.3px;top:197.0px;font-size:10.3px;color:#333;font-weight:normal;letter-spacing:-0.1px;">Name</div>
<div style="position:absolute;left:979.4px;top:196.6px;width:255.80000000000007px;height:19.0px;background:#fff;border:1px solid #c8c8c8;box-sizing:border-box;"></div>
<div class="t" style="left:982.5px;top:196.0px;font-size:10.3px;color:#222;font-weight:normal;">Slide 1</div>
<div style="position:absolute;left:1242.3px;top:196.4px;width:19.5px;height:19.3px;background:#fbfbfb;border:1px solid #cdcdcd;box-sizing:border-box;"></div>
<svg style="position:absolute;left:1246.8px;top:200.4px;" width="11" height="11" viewBox="0 0 11 11"><path d="M8.5 5 V10.5 H0.5 V2.5 H6" stroke="#555" fill="none" stroke-width="1"/><path d="M4 7.2 L4.5 5 L9.5 0 L11 1.5 L6 6.5 Z" fill="#2a7ac8"/></svg>
<div class="t" style="left:915.3px;top:227.3px;font-size:10.3px;color:#333;font-weight:normal;letter-spacing:-0.1px;">Description</div>
<div style="position:absolute;left:979.4px;top:226.3px;width:255.80000000000007px;height:19.299999999999983px;background:#fff;border:1px solid #c8c8c8;box-sizing:border-box;"></div>
<div style="position:absolute;left:1242.3px;top:226.3px;width:19.5px;height:19.3px;background:#fbfbfb;border:1px solid #cdcdcd;box-sizing:border-box;"></div>
<svg style="position:absolute;left:1246.8px;top:230.3px;" width="11" height="11" viewBox="0 0 11 11"><path d="M8.5 5 V10.5 H0.5 V2.5 H6" stroke="#555" fill="none" stroke-width="1"/><path d="M4 7.2 L4.5 5 L9.5 0 L11 1.5 L6 6.5 Z" fill="#2a7ac8"/></svg>
<div class="t" style="left:915.3px;top:253.2px;font-size:10.3px;color:#333;font-weight:normal;letter-spacing:-0.1px;">Duration</div>
<div style="position:absolute;left:1178.4px;top:252.8px;width:83.19999999999982px;height:18.80000000000001px;background:#fff;border:1px solid #c8c8c8;box-sizing:border-box;"></div>
<svg style="position:absolute;left:1249.6px;top:255.3px;" width="8" height="14" viewBox="0 0 8 14"><path d="M0.5 4.5 L4 1 L7.5 4.5 M0.5 9.5 L4 13 L7.5 9.5" stroke="#999" stroke-width="0.9" fill="none"/></svg>
<div class="t" style="left:844.5999999999999px;width:400px;text-align:right;top:253.20000000000005px;font-size:10.3px;color:#333;font-weight:normal;">0:03.000</div>
<svg style="position:absolute;left:915px;top:279.5px;" width="11" height="11" viewBox="0 0 11 11"><rect x="0.5" y="0.5" width="10" height="10" fill="#fff" stroke="#b0b0b0"/></svg>
<div class="t" style="left:931px;top:276.0px;font-size:10.3px;color:#333;font-weight:normal;letter-spacing:-0.1px;">Auto Advance</div>
<svg style="position:absolute;left:907px;top:309.40000000000003px;" width="8" height="5" viewBox="0 0 8 5"><path d="M0 0 H8 L4 4.6 Z" fill="#1a6fbb"/></svg>
<div class="t" style="left:921px;top:302.3px;font-size:9.8px;color:#1a6fbb;font-weight:bold;">Background Fill</div>
<svg style="position:absolute;left:915px;top:328.9px;" width="11" height="11" viewBox="0 0 11 11"><circle cx="5.5" cy="5.5" r="5" fill="#fff" stroke="#b0b0b0" stroke-width="1"/></svg>
<div class="t" style="left:931px;top:325.4px;font-size:10.3px;color:#333;font-weight:normal;letter-spacing:-0.1px;">No Fill</div>
<svg style="position:absolute;left:915px;top:349.5px;" width="11" height="11" viewBox="0 0 11 11"><circle cx="5.5" cy="5.5" r="5" fill="#fff" stroke="#b0b0b0" stroke-width="1"/></svg>
<div class="t" style="left:931px;top:346.0px;font-size:10.3px;color:#333;font-weight:normal;letter-spacing:-0.1px;">Solid Fill</div>
<svg style="position:absolute;left:915px;top:370.1px;" width="11" height="11" viewBox="0 0 11 11"><circle cx="5.5" cy="5.5" r="5" fill="#fff" stroke="#b0b0b0" stroke-width="1"/></svg>
<div class="t" style="left:931px;top:366.6px;font-size:10.3px;color:#333;font-weight:normal;letter-spacing:-0.1px;">Gradient Fill</div>
<svg style="position:absolute;left:915px;top:390.8px;" width="11" height="11" viewBox="0 0 11 11"><circle cx="5.5" cy="5.5" r="5" fill="#fff" stroke="#b0b0b0" stroke-width="1"/><circle cx="5.5" cy="5.5" r="2.4" fill="#222"/></svg>
<div class="t" style="left:931px;top:387.3px;font-size:10.3px;color:#333;font-weight:normal;letter-spacing:-0.1px;">Image Fill</div>
<div style="position:absolute;left:912px;top:413px;width:353px;height:1px;background:#d6d6d6;"></div>
<div class="t" style="left:915.3px;top:422.3px;font-size:10.3px;color:#333;font-weight:normal;letter-spacing:-0.1px;">Image</div>
<div style="position:absolute;left:951.3px;top:421.3px;width:240.0px;height:18.5px;background:#fff;border:1px solid #c8c8c8;box-sizing:border-box;"></div>
<div class="t" style="left:956.6px;top:421.8px;font-size:10.3px;color:#222;font-weight:normal;">image1</div>
<div style="position:absolute;left:1195.6px;top:421.2px;width:19.7px;height:19px;background:#fbfbfb;border:1px solid #cdcdcd;box-sizing:border-box;"></div>
<svg style="position:absolute;left:1199.6px;top:425.2px;" width="12" height="11" viewBox="0 0 12 11"><rect x="2.5" y="0.5" width="9" height="8" fill="#fff" stroke="#888" stroke-width="0.8"/><rect x="0.5" y="2.5" width="9" height="8" fill="#fff" stroke="#888" stroke-width="0.8"/><path d="M1.5 9.5 L4.5 6 L6.5 8 L8.5 6.5 V9.5 Z" fill="#2aa0b3"/><circle cx="3.5" cy="4.8" r="1" fill="#2aa0b3"/></svg>
<div style="position:absolute;left:1218.4px;top:421.2px;width:20.3px;height:19px;background:#fbfbfb;border:1px solid #cdcdcd;box-sizing:border-box;"></div>
<svg style="position:absolute;left:1221.9px;top:425.2px;" width="13" height="12" viewBox="0 0 13 12"><path d="M0.5 2 H4.5 L5.5 3 H11 V10.5 H0.5 Z" fill="#f5b030"/><path d="M0.5 10.5 L2 5 H12 L11 10.5 Z" fill="#fbd27a"/><circle cx="10" cy="9.5" r="2.5" fill="#3aa84a"/></svg>
<div style="position:absolute;left:1242.3px;top:421.2px;width:19.5px;height:19px;background:#fbfbfb;border:1px solid #cdcdcd;box-sizing:border-box;"></div>
<div style="position:absolute;left:1247.3px;top:429.7px;width:9.5px;height:2px;background:#e8472a;"></div>
<svg style="position:absolute;left:915px;top:448.5px;" width="11" height="11" viewBox="0 0 11 11"><circle cx="5.5" cy="5.5" r="5" fill="#fff" stroke="#b0b0b0" stroke-width="1"/></svg>
<div class="t" style="left:931px;top:445.0px;font-size:10.3px;color:#333;font-weight:normal;letter-spacing:-0.1px;">Tile</div>
<svg style="position:absolute;left:1091.9px;top:448.5px;" width="11" height="11" viewBox="0 0 11 11"><circle cx="5.5" cy="5.5" r="5" fill="#fff" stroke="#b0b0b0" stroke-width="1"/><circle cx="5.5" cy="5.5" r="2.4" fill="#222"/></svg>
<div class="t" style="left:1107.5px;top:445.0px;font-size:10.3px;color:#333;font-weight:normal;letter-spacing:-0.1px;">Stretch</div>
<svg style="position:absolute;left:915px;top:475.8px;" width="11" height="11" viewBox="0 0 11 11"><rect x="0.5" y="0.5" width="10" height="10" fill="#fff" stroke="#b0b0b0"/><path d="M2.5 5.5 L4.5 8 L8.5 1.5" stroke="#222" stroke-width="1.3" fill="none"/></svg>
<div class="t" style="left:931px;top:472.3px;font-size:10.3px;color:#333;font-weight:normal;letter-spacing:-0.1px;">Hide Background Objects</div>
<div style="position:absolute;left:915.3px;top:498.4px;width:73.5px;height:20.399999999999977px;background:#fdfdfd;border:1px solid #c9c9c9;box-sizing:border-box;"></div>
<div class="t" style="left:752.05px;width:400px;text-align:center;top:499.59999999999997px;font-size:10.2px;color:#222;font-weight:normal;letter-spacing:-0.1px;">Apply to All</div>
<div style="position:absolute;left:995px;top:498.4px;width:100px;height:20.399999999999977px;background:#fdfdfd;border:1px solid #c9c9c9;box-sizing:border-box;"></div>
<div class="t" style="left:845.0px;width:400px;text-align:center;top:499.59999999999997px;font-size:10.2px;color:#222;font-weight:normal;letter-spacing:-0.1px;">Reset Background</div>
<svg style="position:absolute;left:907px;top:543.4px;" width="8" height="5" viewBox="0 0 8 5"><path d="M0 0 H8 L4 4.6 Z" fill="#1a6fbb"/></svg>
<div class="t" style="left:921px;top:536.3000000000001px;font-size:9.8px;color:#1a6fbb;font-weight:bold;">Background Image</div>
<div class="t" style="left:911.5px;top:559.1px;font-size:10.3px;color:#333;font-weight:normal;letter-spacing:-0.1px;">Image</div>
<div style="position:absolute;left:948.2px;top:558.5px;width:247.0px;height:18.600000000000023px;background:#fff;border:1px solid #c8c8c8;box-sizing:border-box;"></div>
<div class="t" style="left:953px;top:558.6px;font-size:10.3px;color:#222;font-weight:normal;">None</div>
<div style="position:absolute;left:1198.8px;top:558.3px;width:19.7px;height:19px;background:#fbfbfb;border:1px solid #cdcdcd;box-sizing:border-box;"></div>
<svg style="position:absolute;left:1202.8px;top:562.3px;" width="12" height="11" viewBox="0 0 12 11"><rect x="2.5" y="0.5" width="9" height="8" fill="#fff" stroke="#888" stroke-width="0.8"/><rect x="0.5" y="2.5" width="9" height="8" fill="#fff" stroke="#888" stroke-width="0.8"/><path d="M1.5 9.5 L4.5 6 L6.5 8 L8.5 6.5 V9.5 Z" fill="#2aa0b3"/><circle cx="3.5" cy="4.8" r="1" fill="#2aa0b3"/></svg>
<div style="position:absolute;left:1222.2px;top:558.3px;width:20.3px;height:19px;background:#fbfbfb;border:1px solid #cdcdcd;box-sizing:border-box;"></div>
<svg style="position:absolute;left:1225.7px;top:562.3px;" width="13" height="12" viewBox="0 0 13 12"><path d="M0.5 2 H4.5 L5.5 3 H11 V10.5 H0.5 Z" fill="#f5b030"/><path d="M0.5 10.5 L2 5 H12 L11 10.5 Z" fill="#fbd27a"/><circle cx="10" cy="9.5" r="2.5" fill="#3aa84a"/></svg>
<div style="position:absolute;left:1246px;top:558.3px;width:19.5px;height:19px;background:#fbfbfb;border:1px solid #cdcdcd;box-sizing:border-box;"></div>
<div style="position:absolute;left:1251px;top:566.8px;width:9.5px;height:2px;background:#c8c8c8;"></div>
<div class="t" style="left:914.5px;top:585.3px;font-size:10.3px;color:#333;font-weight:normal;letter-spacing:-0.1px;">Left</div>
<div style="position:absolute;left:945.2px;top:585.3px;width:65.59999999999991px;height:17.40000000000009px;background:#fafafa;border:1px solid #e4e4e4;box-sizing:border-box;"></div>
<svg style="position:absolute;left:998.8px;top:587.8px;" width="8" height="14" viewBox="0 0 8 14"><path d="M0.5 4.5 L4 1 L7.5 4.5 M0.5 9.5 L4 13 L7.5 9.5" stroke="#999" stroke-width="0.9" fill="none"/></svg>
<div class="t" style="left:914.5px;top:607.2px;font-size:10.3px;color:#333;font-weight:normal;letter-spacing:-0.1px;">Top</div>
<div style="position:absolute;left:945.2px;top:607.2px;width:65.59999999999991px;height:17.5px;background:#fafafa;border:1px solid #e4e4e4;box-sizing:border-box;"></div>
<svg style="position:absolute;left:998.8px;top:609.7px;" width="8" height="14" viewBox="0 0 8 14"><path d="M0.5 4.5 L4 1 L7.5 4.5 M0.5 9.5 L4 13 L7.5 9.5" stroke="#999" stroke-width="0.9" fill="none"/></svg>
<div class="t" style="left:1152.7px;top:585.3px;font-size:10.3px;color:#333;font-weight:normal;letter-spacing:-0.1px;">Width</div>
<div style="position:absolute;left:1195.8px;top:585.3px;width:65.5px;height:17.40000000000009px;background:#fafafa;border:1px solid #e4e4e4;box-sizing:border-box;"></div>
<svg style="position:absolute;left:1249.3px;top:587.8px;" width="8" height="14" viewBox="0 0 8 14"><path d="M0.5 4.5 L4 1 L7.5 4.5 M0.5 9.5 L4 13 L7.5 9.5" stroke="#999" stroke-width="0.9" fill="none"/></svg>
<div class="t" style="left:1152.7px;top:607.2px;font-size:10.3px;color:#333;font-weight:normal;letter-spacing:-0.1px;">Height</div>
<div style="position:absolute;left:1195.8px;top:607.2px;width:65.5px;height:17.5px;background:#fafafa;border:1px solid #e4e4e4;box-sizing:border-box;"></div>
<svg style="position:absolute;left:1249.3px;top:609.7px;" width="8" height="14" viewBox="0 0 8 14"><path d="M0.5 4.5 L4 1 L7.5 4.5 M0.5 9.5 L4 13 L7.5 9.5" stroke="#999" stroke-width="0.9" fill="none"/></svg>
<div style="position:absolute;left:915.5px;top:632.8px;width:111.79999999999995px;height:19.5px;background:#f6f6f6;border:1px solid #dcdcdc;box-sizing:border-box;"></div>
<div class="t" style="left:771.4px;width:400px;text-align:center;top:633.55px;font-size:10.2px;color:#a8a8a8;font-weight:normal;letter-spacing:-0.1px;">Restore Original Size</div>
<div style="position:absolute;left:915.5px;top:659.8px;width:99.79999999999995px;height:19.600000000000023px;background:#f6f6f6;border:1px solid #dcdcdc;box-sizing:border-box;"></div>
<div class="t" style="left:765.4px;width:400px;text-align:center;top:660.5999999999999px;font-size:10.2px;color:#a8a8a8;font-weight:normal;letter-spacing:-0.1px;">Fit To Background</div>
<svg style="position:absolute;left:907px;top:701.8px;" width="8" height="5" viewBox="0 0 8 5"><path d="M0 0 H8 L4 4.6 Z" fill="#1a6fbb"/></svg>
<div class="t" style="left:921px;top:694.7px;font-size:9.8px;color:#1a6fbb;font-weight:bold;">Accessibility</div>
<div style="position:absolute;left:0px;top:557px;width:900px;height:146px;background:#efefef;"></div>
<div style="position:absolute;left:3px;top:561px;width:894px;height:22.5px;background:#ebebeb;"></div>
<div style="position:absolute;left:3px;top:583.5px;width:894px;height:1px;background:#d8d8d8;"></div>
<div class="t" style="left:3px;top:561.5px;font-size:9.2px;color:#333;font-weight:bold;letter-spacing:-0.2px;">TIMELINE</div>
<svg style="position:absolute;left:168px;top:565px;" width="13" height="13" viewBox="0 0 13 13"><rect x="3" y="3" width="9.5" height="9.5" fill="#b8b8b8"/><rect x="0.5" y="0.5" width="9" height="9" fill="#1e6fc0"/></svg>
<div style="position:absolute;left:187px;top:564px;width:1px;height:15px;background:#c8c8c8;"></div>
<svg style="position:absolute;left:196px;top:566px;" width="9" height="11" viewBox="0 0 9 11"><path d="M0.5 0.5 L8.5 5.5 L0.5 10.5 Z" fill="#3aa84a"/></svg>
<svg style="position:absolute;left:212px;top:570px;" width="5" height="3" viewBox="0 0 5 3"><path d="M0 0 H5 L2.5 3 Z" fill="#444"/></svg>
<div style="position:absolute;left:226.5px;top:567px;width:8.5px;height:8.5px;background:#1e6fc0;"></div>
<div style="position:absolute;left:243px;top:564px;width:1px;height:15px;background:#c8c8c8;"></div>
<svg style="position:absolute;left:250px;top:565.5px;" width="11" height="11" viewBox="0 0 11 11"><circle cx="5.5" cy="5.5" r="5.3" fill="#e0202a"/><rect x="4.6" y="2.2" width="1.8" height="4.5" fill="#fff"/><rect x="4.6" y="7.7" width="1.8" height="1.6" fill="#fff"/></svg>
<svg style="position:absolute;left:268px;top:570px;" width="5" height="3" viewBox="0 0 5 3"><path d="M0 0 H5 L2.5 3 Z" fill="#444"/></svg>
<div style="position:absolute;left:279.5px;top:564px;width:1px;height:15px;background:#c8c8c8;"></div>
<svg style="position:absolute;left:287px;top:566px;" width="12" height="12" viewBox="0 0 12 12"><circle cx="5" cy="5" r="3.8" fill="#fff" stroke="#666" stroke-width="1.1"/><path d="M7.8 7.8 L11 11" stroke="#666" stroke-width="1.6"/><path d="M3.2 5 H6.8" stroke="#666" stroke-width="0.9"/></svg>
<svg style="position:absolute;left:308px;top:566px;" width="12" height="12" viewBox="0 0 12 12"><circle cx="5" cy="5" r="3.8" fill="#fff" stroke="#666" stroke-width="1.1"/><path d="M7.8 7.8 L11 11" stroke="#666" stroke-width="1.6"/><path d="M3.2 5 H6.8" stroke="#666" stroke-width="0.9"/></svg>
<svg style="position:absolute;left:328.5px;top:566px;" width="12" height="12" viewBox="0 0 12 12"><circle cx="5" cy="5" r="3.8" fill="#fff" stroke="#666" stroke-width="1.1"/><path d="M7.8 7.8 L11 11" stroke="#666" stroke-width="1.6"/><path d="M3.2 5 H6.8 M5 3.2 V6.8" stroke="#666" stroke-width="0.9"/></svg>
<svg style="position:absolute;left:354.2px;top:565.5px;" width="12" height="12" viewBox="0 0 12 12"><rect x="1" y="1" width="2" height="3" fill="#a0a0a0"/><rect x="5" y="1" width="2" height="3" fill="#a0a0a0"/><rect x="9" y="1" width="2" height="3" fill="#a0a0a0"/><rect x="3" y="6" width="6" height="5" fill="#a0a0a0"/></svg>
<svg style="position:absolute;left:375px;top:565.5px;" width="12" height="12" viewBox="0 0 12 12"><rect x="1" y="1" width="10" height="3" fill="#a0a0a0"/><rect x="3" y="6" width="6" height="5" fill="#a0a0a0"/><path d="M6 4 V6" stroke="#a0a0a0"/></svg>
<svg style="position:absolute;left:395.8px;top:565.5px;" width="12" height="12" viewBox="0 0 12 12"><rect x="1" y="1" width="5" height="5" fill="#a0a0a0"/><rect x="6.5" y="5.5" width="4" height="5.5" fill="none" stroke="#a0a0a0" stroke-width="0.8"/></svg>
<svg style="position:absolute;left:416.5px;top:565.5px;" width="12" height="12" viewBox="0 0 12 12"><path d="M3 0 V9 H12 M0 3 H9 V12" stroke="#a0a0a0" fill="none" stroke-width="1"/><rect x="4" y="4" width="4" height="4" fill="#a0a0a0"/></svg>
<svg style="position:absolute;left:437.3px;top:565.5px;" width="12" height="12" viewBox="0 0 12 12"><rect x="2" y="0.5" width="5" height="5" fill="#a0a0a0"/><path d="M4.5 5.5 V11 M0 8.5 H4 M8 8.5 H12" stroke="#a0a0a0" stroke-width="1"/><rect x="8" y="7" width="3" height="4" fill="#a0a0a0"/></svg>
<svg style="position:absolute;left:463.7px;top:565.5px;" width="12" height="12" viewBox="0 0 12 12"><path d="M3 1 H1 V11 H3 M9 1 H11 V11 H9" stroke="#a0a0a0" fill="none"/><rect x="5" y="4" width="2" height="4" fill="#a0a0a0"/></svg>
<svg style="position:absolute;left:484.5px;top:565.5px;" width="12" height="12" viewBox="0 0 12 12"><path d="M3 2 H1 V10 H3 M9 2 H11 V10 H9 M3 6 H9" stroke="#a0a0a0" fill="none"/></svg>
<svg style="position:absolute;left:505.3px;top:565.5px;" width="12" height="12" viewBox="0 0 12 12"><circle cx="8" cy="2" r="1.5" fill="#a0a0a0"/><path d="M2 5 L6 4 L8 6 L6 9 L8 12 M6 9 L3 11 M8 6 L11 7" stroke="#a0a0a0" stroke-width="1.3" fill="none"/></svg>
<svg style="position:absolute;left:524px;top:565.5px;" width="12" height="12" viewBox="0 0 12 12"><path d="M1 4 H3.5 L7 1 V11 L3.5 8 H1 Z" fill="#a0a0a0"/><path d="M8.5 3.5 A3 3 0 0 1 8.5 8.5" stroke="#a0a0a0" fill="none"/></svg>
<svg style="position:absolute;left:555.2px;top:565.5px;" width="12" height="12" viewBox="0 0 12 12"><rect x="0.5" y="0.5" width="11" height="11" fill="#f6f6f6" stroke="#a0a0a0"/><path d="M2 10 L10 2 V10 Z" fill="#a0a0a0"/></svg>
<svg style="position:absolute;left:576px;top:565.5px;" width="12" height="12" viewBox="0 0 12 12"><rect x="0.5" y="0.5" width="11" height="11" fill="#f6f6f6" stroke="#a0a0a0"/><path d="M2 2 L10 10 H2 Z" fill="#a0a0a0"/></svg>
<svg style="position:absolute;left:595.3px;top:565.5px;" width="12" height="12" viewBox="0 0 12 12"><path d="M1.5 11 V6 M4.5 11 V3 M7.5 11 V1 M10.5 11 V5" stroke="#a0a0a0" stroke-width="1.4"/></svg>
<svg style="position:absolute;left:626.5px;top:565.5px;" width="12" height="12" viewBox="0 0 12 12"><path d="M0 1 H12" stroke="#a0a0a0"/><path d="M3.5 11 V4 M6.5 11 V2 M9.5 11 V6" stroke="#a0a0a0" stroke-width="1.4"/></svg>
<div style="position:absolute;left:346.5px;top:564px;width:1px;height:15px;background:#c8c8c8;"></div>
<div style="position:absolute;left:456px;top:564px;width:1px;height:15px;background:#c8c8c8;"></div>
<div style="position:absolute;left:645px;top:564px;width:1px;height:15px;background:#c8c8c8;"></div>
<div style="position:absolute;left:671.5px;top:564px;width:1px;height:15px;background:#c8c8c8;"></div>
<svg style="position:absolute;left:542.5px;top:570px;" width="5" height="3" viewBox="0 0 5 3"><path d="M0 0 H5 L2.5 3 Z" fill="#aaa"/></svg>
<svg style="position:absolute;left:613.5px;top:570px;" width="5" height="3" viewBox="0 0 5 3"><path d="M0 0 H5 L2.5 3 Z" fill="#aaa"/></svg>
<svg style="position:absolute;left:653px;top:566.5px;" width="11" height="10" viewBox="0 0 11 10"><rect x="0" y="0" width="11" height="10" fill="#2fae49"/><text x="5.5" y="8" font-family="Liberation Sans" font-weight="bold" font-size="7" fill="#fff" text-anchor="middle">CC</text></svg>
<svg style="position:absolute;left:679px;top:566px;" width="13" height="11" viewBox="0 0 13 11"><ellipse cx="6.5" cy="3.5" rx="5.5" ry="2.5" fill="none" stroke="#b8b8b8"/><ellipse cx="6.5" cy="7.5" rx="5.5" ry="2.5" fill="#f0f0f0" stroke="#b8b8b8"/></svg>
<svg style="position:absolute;left:703.5px;top:570px;" width="5" height="3" viewBox="0 0 5 3"><path d="M0 0 H5 L2.5 3 Z" fill="#333"/></svg>
<svg style="position:absolute;left:866.3px;top:569px;" width="8" height="6" viewBox="0 0 8 6"><path d="M0 3 H2.5" stroke="#333" stroke-width="1"/><rect x="2.5" y="0.8" width="5" height="4.2" fill="#333"/><rect x="3.5" y="1.8" width="3" height="1" fill="#ddd"/></svg>
<svg style="position:absolute;left:885px;top:569px;" width="6" height="6" viewBox="0 0 6 6"><path d="M0.5 0.5 L5.5 5.5 M5.5 0.5 L0.5 5.5" stroke="#111" stroke-width="1.5"/></svg>
<div style="position:absolute;left:3px;top:584.5px;width:162px;height:116px;background:#efefef;"></div>
<div class="t" style="left:12.3px;top:585.2px;font-size:10.2px;color:#333;font-weight:normal;">Main Timeline</div>
<svg style="position:absolute;left:121.5px;top:592.5px;" width="7" height="4" viewBox="0 0 7 4"><path d="M0 0 H7 L3.5 4 Z" fill="#555"/></svg>
<div style="position:absolute;left:131px;top:586px;width:1px;height:16px;background:#d0d0d0;"></div>
<svg style="position:absolute;left:137.4px;top:590.9px;" width="10" height="7" viewBox="0 0 10 7"><path d="M0.5 3.5 C3 0 7 0 9.5 3.5 C7 7 3 7 0.5 3.5 Z" fill="#7a7a7a"/><circle cx="5" cy="3.5" r="1.4" fill="#dcdcdc"/></svg>
<svg style="position:absolute;left:152.5px;top:589.9px;" width="8" height="9" viewBox="0 0 8 9"><rect x="0.5" y="4" width="6" height="4.5" fill="#666"/><path d="M1.8 4 V2.2 A1.9 1.9 0 0 1 5.6 2.2 V4" stroke="#666" stroke-width="1" fill="none"/></svg>
<div style="position:absolute;left:3px;top:605px;width:894px;height:1px;background:#d8d8d8;"></div>
<div style="position:absolute;left:165px;top:583px;width:1px;height:117px;background:#d8d8d8;"></div>
<div class="t" style="left:12.3px;top:609.0999999999999px;font-size:10.2px;color:#333;font-weight:normal;">Slide</div>
<div class="t" style="left:12.3px;top:627.8px;font-size:10.2px;color:#333;font-weight:normal;">Shape_11</div>
<svg style="position:absolute;left:137.4px;top:632.5px;" width="10" height="7" viewBox="0 0 10 7"><path d="M0.5 3.5 C3 0 7 0 9.5 3.5 C7 7 3 7 0.5 3.5 Z" fill="#7a7a7a"/><circle cx="5" cy="3.5" r="1.4" fill="#dcdcdc"/></svg>
<svg style="position:absolute;left:152.5px;top:631.3px;" width="8" height="9" viewBox="0 0 8 9"><rect x="0.5" y="4" width="6" height="4.5" fill="#666"/><path d="M3.5 4 V2.2 A1.9 1.9 0 0 1 5.6 2.2 V3" stroke="#666" stroke-width="1" fill="none"/></svg>
<div class="t" style="left:12.3px;top:646.8px;font-size:10.2px;color:#333;font-weight:normal;">Shape_10</div>
<svg style="position:absolute;left:137.4px;top:651.5px;" width="10" height="7" viewBox="0 0 10 7"><path d="M0.5 3.5 C3 0 7 0 9.5 3.5 C7 7 3 7 0.5 3.5 Z" fill="#7a7a7a"/><circle cx="5" cy="3.5" r="1.4" fill="#dcdcdc"/></svg>
<svg style="position:absolute;left:152.5px;top:650.3px;" width="8" height="9" viewBox="0 0 8 9"><rect x="0.5" y="4" width="6" height="4.5" fill="#666"/><path d="M3.5 4 V2.2 A1.9 1.9 0 0 1 5.6 2.2 V3" stroke="#666" stroke-width="1" fill="none"/></svg>
<div class="t" style="left:12.3px;top:665.3px;font-size:10.2px;color:#333;font-weight:normal;">Shape_9</div>
<svg style="position:absolute;left:137.4px;top:670.0px;" width="10" height="7" viewBox="0 0 10 7"><path d="M0.5 3.5 C3 0 7 0 9.5 3.5 C7 7 3 7 0.5 3.5 Z" fill="#7a7a7a"/><circle cx="5" cy="3.5" r="1.4" fill="#dcdcdc"/></svg>
<svg style="position:absolute;left:152.5px;top:668.8px;" width="8" height="9" viewBox="0 0 8 9"><rect x="0.5" y="4" width="6" height="4.5" fill="#666"/><path d="M3.5 4 V2.2 A1.9 1.9 0 0 1 5.6 2.2 V3" stroke="#666" stroke-width="1" fill="none"/></svg>
<div class="t" style="left:12.3px;top:683.5999999999999px;font-size:10.2px;color:#333;font-weight:normal;">Shape_8</div>
<svg style="position:absolute;left:137.4px;top:688.3px;" width="10" height="7" viewBox="0 0 10 7"><path d="M0.5 3.5 C3 0 7 0 9.5 3.5 C7 7 3 7 0.5 3.5 Z" fill="#7a7a7a"/><circle cx="5" cy="3.5" r="1.4" fill="#dcdcdc"/></svg>
<svg style="position:absolute;left:152.5px;top:687.0999999999999px;" width="8" height="9" viewBox="0 0 8 9"><rect x="0.5" y="4" width="6" height="4.5" fill="#666"/><path d="M3.5 4 V2.2 A1.9 1.9 0 0 1 5.6 2.2 V3" stroke="#666" stroke-width="1" fill="none"/></svg>
<div style="position:absolute;left:3px;top:627px;width:885px;height:1px;background:#dcdcdc;"></div>
<div style="position:absolute;left:3px;top:645.5px;width:885px;height:1px;background:#dcdcdc;"></div>
<div style="position:absolute;left:3px;top:664px;width:885px;height:1px;background:#dcdcdc;"></div>
<div style="position:absolute;left:3px;top:682.5px;width:885px;height:1px;background:#dcdcdc;"></div>
<div style="position:absolute;left:174.0px;top:597px;width:1px;height:8px;background:#c4c4c4;"></div>
<div style="position:absolute;left:207.5px;top:600px;width:1px;height:5px;background:#c4c4c4;"></div>
<div style="position:absolute;left:241.0px;top:600px;width:1px;height:5px;background:#c4c4c4;"></div>
<div style="position:absolute;left:274.0px;top:600px;width:1px;height:5px;background:#c4c4c4;"></div>
<div style="position:absolute;left:307.5px;top:600px;width:1px;height:5px;background:#c4c4c4;"></div>
<div style="position:absolute;left:341.0px;top:597px;width:1px;height:8px;background:#c4c4c4;"></div>
<div style="position:absolute;left:374.0px;top:600px;width:1px;height:5px;background:#c4c4c4;"></div>
<div style="position:absolute;left:407.5px;top:600px;width:1px;height:5px;background:#c4c4c4;"></div>
<div style="position:absolute;left:440.5px;top:600px;width:1px;height:5px;background:#c4c4c4;"></div>
<div style="position:absolute;left:474.0px;top:600px;width:1px;height:5px;background:#c4c4c4;"></div>
<div style="position:absolute;left:507.5px;top:597px;width:1px;height:8px;background:#c4c4c4;"></div>
<div style="position:absolute;left:540.5px;top:600px;width:1px;height:5px;background:#c4c4c4;"></div>
<div style="position:absolute;left:574.0px;top:600px;width:1px;height:5px;background:#c4c4c4;"></div>
<div style="position:absolute;left:607.5px;top:600px;width:1px;height:5px;background:#c4c4c4;"></div>
<div style="position:absolute;left:640.5px;top:600px;width:1px;height:5px;background:#c4c4c4;"></div>
<div style="position:absolute;left:674.0px;top:597px;width:1px;height:8px;background:#c4c4c4;"></div>
<div style="position:absolute;left:707.5px;top:600px;width:1px;height:5px;background:#c4c4c4;"></div>
<div style="position:absolute;left:740.5px;top:600px;width:1px;height:5px;background:#c4c4c4;"></div>
<div style="position:absolute;left:774.0px;top:600px;width:1px;height:5px;background:#c4c4c4;"></div>
<div style="position:absolute;left:807.5px;top:600px;width:1px;height:5px;background:#c4c4c4;"></div>
<div style="position:absolute;left:840.5px;top:597px;width:1px;height:8px;background:#c4c4c4;"></div>
<div style="position:absolute;left:874.0px;top:600px;width:1px;height:5px;background:#c4c4c4;"></div>
<div class="t" style="left:174.1px;top:580.5px;font-size:7.9px;color:#333;font-weight:normal;">0:00</div>
<div class="t" style="left:141.57px;width:400px;text-align:center;top:580.5px;font-size:7.9px;color:#333;font-weight:normal;">0:05</div>
<div class="t" style="left:308.23999999999995px;width:400px;text-align:center;top:580.5px;font-size:7.9px;color:#333;font-weight:normal;">0:10</div>
<div class="t" style="left:474.90999999999997px;width:400px;text-align:center;top:580.5px;font-size:7.9px;color:#333;font-weight:normal;">0:15</div>
<div class="t" style="left:641.5799999999999px;width:400px;text-align:center;top:580.5px;font-size:7.9px;color:#333;font-weight:normal;">0:20</div>
<div style="position:absolute;left:174px;top:607.5px;width:100.3px;height:93px;background:#e6eafb;border-left:1px solid #b8bcd0;border-right:1px solid #b8bcd0;box-sizing:border-box;"></div>
<div style="position:absolute;left:174px;top:607.5px;width:100.3px;height:1px;background:#b8bcd0;"></div>
<div style="position:absolute;left:174px;top:627px;width:100.3px;height:1px;background:#b8bcd0;"></div>
<div style="position:absolute;left:174px;top:645.5px;width:100.3px;height:1px;background:#b8bcd0;"></div>
<div style="position:absolute;left:174px;top:664px;width:100.3px;height:1px;background:#b8bcd0;"></div>
<div style="position:absolute;left:174px;top:682.5px;width:100.3px;height:1px;background:#b8bcd0;"></div>
<div style="position:absolute;left:270.4px;top:609px;width:1.8px;height:17px;background:#f0a030;"></div>
<div style="position:absolute;left:273.6px;top:607.5px;width:1.1px;height:19px;background:#e83030;"></div>
<div style="position:absolute;left:886px;top:606px;width:11px;height:94px;background:#e6e6e6;"></div>
<div style="position:absolute;left:887px;top:617.5px;width:9px;height:30px;background:#f6f6f6;border:1px solid #d8d8d8;box-sizing:border-box;"></div>
<svg style="position:absolute;left:887px;top:608px;" width="9" height="7" viewBox="0 0 9 7"><path d="M1 6 L4.5 2 L8 6 Z" fill="#d0d0d0"/></svg>
<svg style="position:absolute;left:887px;top:691px;" width="9" height="7" viewBox="0 0 9 7"><path d="M1 1 L4.5 5 L8 1 Z" fill="#d0d0d0"/></svg>
<div style="position:absolute;left:0px;top:557.5px;width:899.5px;height:146px;border:3px solid #10ad4b;border-radius:6px;box-sizing:border-box;"></div>
<div style="position:absolute;left:0px;top:703px;width:1280px;height:17px;background:#0b6fbc;"></div>
<div class="t" style="left:1.8px;top:702.6px;font-size:9.8px;color:#fff;font-weight:normal;">Slide: 1 of 13</div>
<div class="t" style="left:909.4px;top:703.0px;font-size:9.8px;color:#fff;font-weight:normal;">English (United States)</div>
<svg style="position:absolute;left:892px;top:706px;" width="9" height="11" viewBox="0 0 9 11"><path d="M1 10 L8 3 M3 5 L6 8" stroke="#9cc3e8" stroke-width="1"/></svg>
<svg style="position:absolute;left:1041px;top:706px;" width="12" height="11" viewBox="0 0 12 11"><rect x="0.5" y="0.5" width="11" height="6" fill="none" stroke="#fff"/><path d="M3 3 H9 M6 7 V10 M3 10 H9" stroke="#fff"/></svg>
<svg style="position:absolute;left:1063px;top:710px;" width="6" height="4" viewBox="0 0 6 4"><path d="M0 0 H6 L3 4 Z" fill="#fff"/></svg>
<div style="position:absolute;left:1075.5px;top:711.5px;width:8px;height:1.4px;background:#fff;"></div>
<div style="position:absolute;left:1088px;top:712px;width:97px;height:1px;background:#cfe0f2;"></div>
<div style="position:absolute;left:1108.5px;top:706px;width:3px;height:12px;background:#fff;"></div>
<div style="position:absolute;left:1136.5px;top:710.5px;width:1px;height:4px;background:#cfe0f2;"></div>
<svg style="position:absolute;left:1190px;top:708px;" width="9" height="9" viewBox="0 0 9 9"><path d="M0 4.5 H9 M4.5 0 V9" stroke="#fff" stroke-width="1.4"/></svg>
<div class="t" style="left:1209.3px;top:703.0px;font-size:9.8px;color:#fff;font-weight:normal;">51%</div>
<svg style="position:absolute;left:1242px;top:706px;" width="11" height="11" viewBox="0 0 11 11"><rect x="0.5" y="0.5" width="10" height="10" fill="none" stroke="#fff"/><rect x="2.5" y="2.5" width="1.6" height="1.6" fill="#fff"/><rect x="7" y="2.5" width="1.6" height="1.6" fill="#fff"/><rect x="2.5" y="7" width="1.6" height="1.6" fill="#fff"/><rect x="7" y="7" width="1.6" height="1.6" fill="#fff"/><rect x="4.7" y="4.7" width="1.6" height="1.6" fill="#fff"/></svg>
<svg style="position:absolute;left:0;top:0" width="1280" height="720" viewBox="0 0 1280 720"><defs><filter id="sh108" x="-10%" y="-10%" width="130%" height="140%"><feGaussianBlur in="SourceAlpha" stdDeviation="1.2"/><feOffset dx="2" dy="2.5"/><feComponentTransfer><feFuncA type="linear" slope="0.45"/></feComponentTransfer><feMerge><feMergeNode/><feMergeNode in="SourceGraphic"/></feMerge></filter></defs><path d="M473.8 108.6 H722.4 A13 13 0 0 1 735.4 121.6 V175.9 A13 13 0 0 1 722.4 188.9 H473.8 A13 13 0 0 1 460.8 175.9 V140.3 L435.8 108.6 L460.8 124.7 V121.6 A13 13 0 0 1 473.8 108.6 Z" fill="#25834b" stroke="#1d3d2a" stroke-width="1.1" filter="url(#sh108)"/></svg>
<div class="t" style="left:398.1px;width:400px;text-align:center;top:125.5px;font-size:20.3px;color:#fff;font-weight:normal;">Insert tab: Add more objects</div>
<div class="t" style="left:398.1px;width:400px;text-align:center;top:151.3px;font-size:20.3px;color:#fff;font-weight:normal;">to the canvas.</div>
<svg style="position:absolute;left:0;top:0" width="1280" height="720" viewBox="0 0 1280 720"><defs><filter id="sh609" x="-10%" y="-10%" width="130%" height="140%"><feGaussianBlur in="SourceAlpha" stdDeviation="1.2"/><feOffset dx="2" dy="2.5"/><feComponentTransfer><feFuncA type="linear" slope="0.45"/></feComponentTransfer><feMerge><feMergeNode/><feMergeNode in="SourceGraphic"/></feMerge></filter></defs><path d="M405.4 609.6 H652.5 A13 13 0 0 1 665.5 622.6 V676.5 A13 13 0 0 1 652.5 689.5 H405.4 A13 13 0 0 1 392.4 676.5 V641.6 L366.6 609.6 L392.4 625.6 V622.6 A13 13 0 0 1 405.4 609.6 Z" fill="#25834b" stroke="#1d3d2a" stroke-width="1.1" filter="url(#sh609)"/></svg>
<div class="t" style="left:328.95000000000005px;width:400px;text-align:center;top:614.8px;font-size:20.3px;color:#fff;font-weight:normal;">Timeline Pane: Edit duration,</div>
<div class="t" style="left:328.95000000000005px;width:400px;text-align:center;top:640.1999999999999px;font-size:20.3px;color:#fff;font-weight:normal;letter-spacing:0.35px;">startpoint, endpoint,</div>
<div class="t" style="left:328.95000000000005px;width:400px;text-align:center;top:665.5999999999999px;font-size:20.3px;color:#fff;font-weight:normal;letter-spacing:0.1px;">animation... of objects.</div>
</body></html>
